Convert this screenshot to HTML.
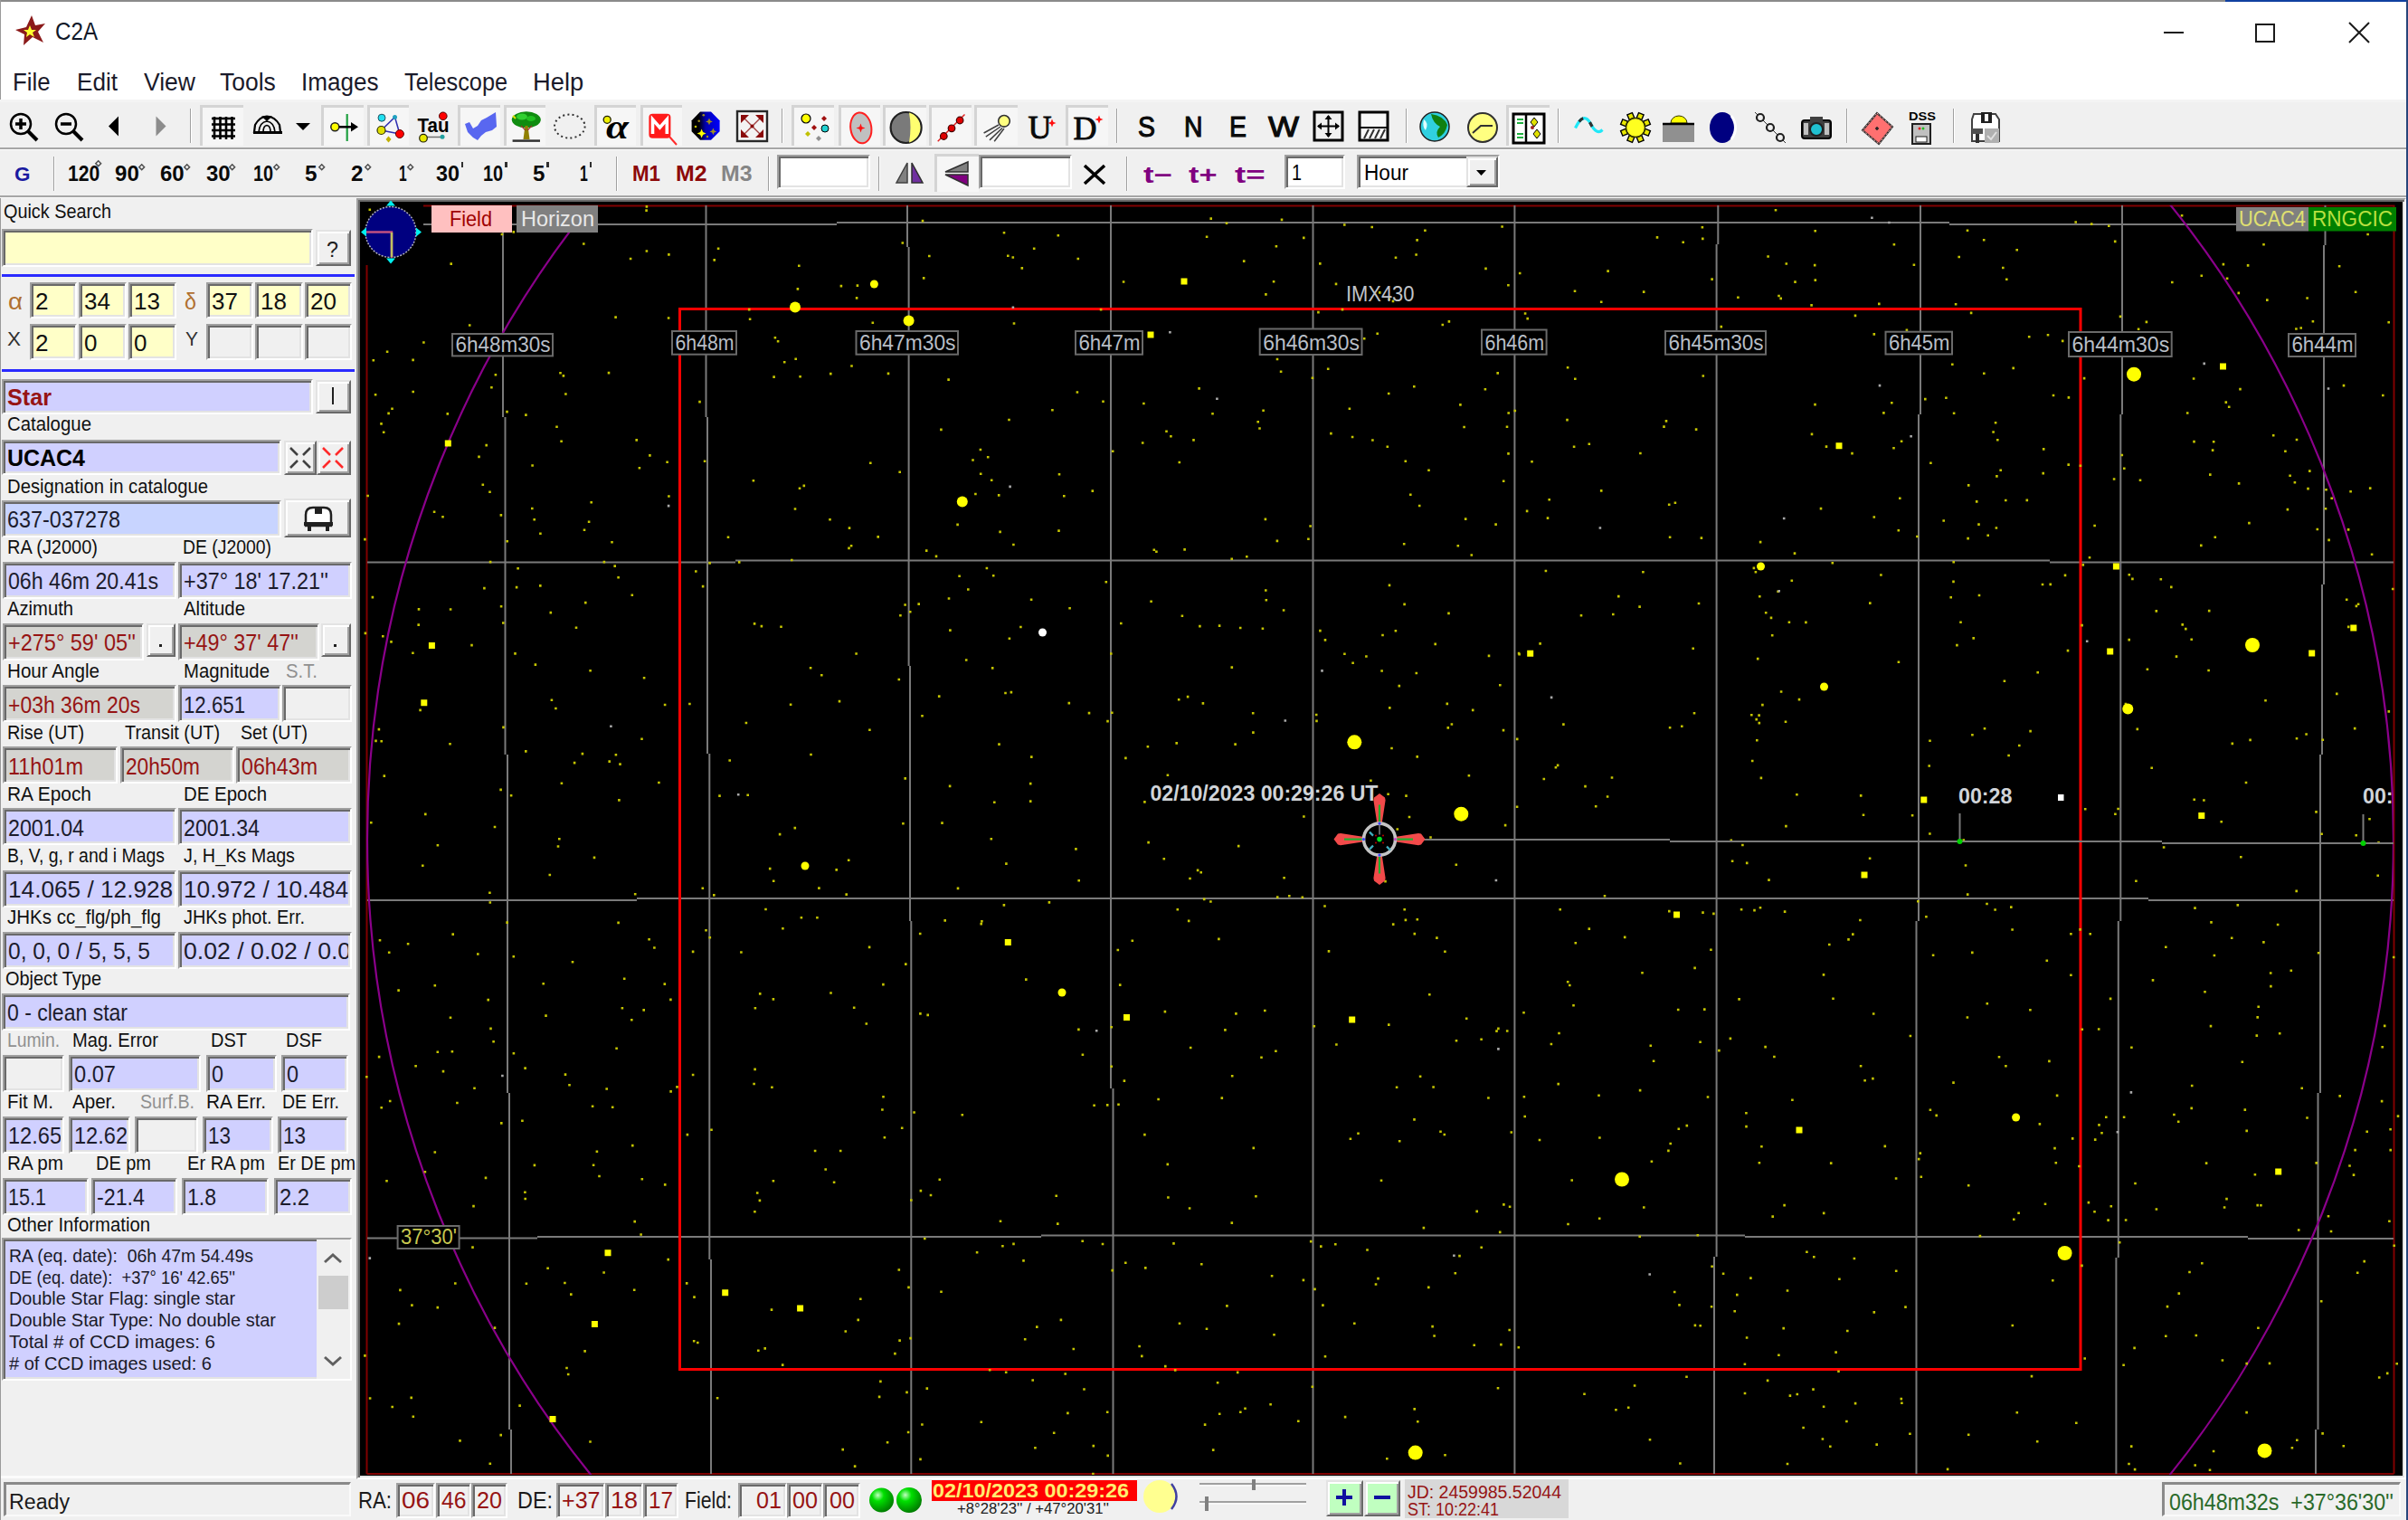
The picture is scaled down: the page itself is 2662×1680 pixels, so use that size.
<!DOCTYPE html>
<html><head><meta charset="utf-8"><title>C2A</title>
<style>
html,body{margin:0;padding:0;}
body{width:2662px;height:1680px;position:relative;overflow:hidden;background:#f0f0f0;font-family:"Liberation Sans",sans-serif;}
.r{position:absolute;box-sizing:border-box;}
.t{position:absolute;white-space:pre;line-height:1;transform-origin:0 0;}
svg.r{overflow:visible}
</style></head><body>
<div class="r" style="left:0.0px;top:0.0px;width:2662.0px;height:110.0px;background:#fff;"></div><div class="r" style="left:0.0px;top:0.0px;width:2460.0px;height:2.0px;background:#8a8a8a;"></div><div class="r" style="left:2460.0px;top:0.0px;width:202.0px;height:2.0px;background:#1040a0;"></div><div class="r" style="left:0.0px;top:0.0px;width:1.0px;height:1680.0px;background:#9a9a9a;"></div><div class="r" style="left:2660.0px;top:0.0px;width:2.0px;height:1680.0px;background:#27457a;"></div><svg class="r" style="left:14px;top:14px;" width="40" height="40" viewBox="0 0 40 40"><path d="M21 3 L25 14 L36 12 L28 21 L34 33 L22 27 L12 36 L13 24 L3 19 L15 16 Z" fill="#8b1a1a"/><path d="M19 14 L21 19 L26 19 L22 22 L24 27 L19 24 L15 27 L16 22 L12 19 L17 19Z" fill="#ffff30"/></svg><div class="t" style="left:61.0px;top:22.1px;font-size:27px;color:#101828;transform:scaleX(0.8948);">C2A</div><div class="r" style="left:2392.0px;top:35.0px;width:22.0px;height:2.0px;background:#1a1a1a;"></div><div class="r" style="left:2493.0px;top:26.0px;width:22.0px;height:21.0px;border:2px solid #1a1a1a;box-sizing:border-box;"></div><svg class="r" style="left:2594px;top:22px;" width="28" height="28" viewBox="0 0 28 28"><path d="M3 3 L25 25 M25 3 L3 25" stroke="#1a1a1a" stroke-width="2"/></svg><div class="t" style="left:14.2px;top:78.0px;font-size:27px;color:#1a1a2a;transform:scaleX(0.9561);">File</div><div class="t" style="left:84.5px;top:78.0px;font-size:27px;color:#1a1a2a;transform:scaleX(0.9672);">Edit</div><div class="t" style="left:158.5px;top:78.0px;font-size:27px;color:#1a1a2a;transform:scaleX(0.9821);">View</div><div class="t" style="left:243.3px;top:78.0px;font-size:27px;color:#1a1a2a;transform:scaleX(0.9804);">Tools</div><div class="t" style="left:333.0px;top:78.0px;font-size:27px;color:#1a1a2a;transform:scaleX(0.9645);">Images</div><div class="t" style="left:447.0px;top:78.0px;font-size:27px;color:#1a1a2a;transform:scaleX(0.9385);">Telescope</div><div class="t" style="left:589.0px;top:78.0px;font-size:27px;color:#1a1a2a;transform:scaleX(1.0120);">Help</div><div class="r" style="left:0.0px;top:110.0px;width:2660.0px;height:3.0px;background:#f4f4f4;"></div><div class="r" style="left:0.0px;top:113.0px;width:2660.0px;height:50.0px;background:#f0f0f0;"></div><div class="r" style="left:0.0px;top:163.0px;width:2660.0px;height:2.0px;background:#a6a6a6;"></div><div class="r" style="left:0.0px;top:165.0px;width:2660.0px;height:1.0px;background:#fdfdfd;"></div><div class="r" style="left:221.0px;top:116.0px;width:48.0px;height:45.0px;background:#f6f6f6;border-top:3px solid #d4d4d4;border-left:3px solid #d4d4d4;box-sizing:border-box;"></div><div class="r" style="left:355.0px;top:116.0px;width:47.0px;height:45.0px;background:#f6f6f6;border-top:3px solid #d4d4d4;border-left:3px solid #d4d4d4;box-sizing:border-box;"></div><div class="r" style="left:405.5px;top:116.0px;width:46.5px;height:45.0px;background:#f6f6f6;border-top:3px solid #d4d4d4;border-left:3px solid #d4d4d4;box-sizing:border-box;"></div><div class="r" style="left:506.0px;top:116.0px;width:47.0px;height:45.0px;background:#f6f6f6;border-top:3px solid #d4d4d4;border-left:3px solid #d4d4d4;box-sizing:border-box;"></div><div class="r" style="left:557.0px;top:116.0px;width:45.5px;height:45.0px;background:#f6f6f6;border-top:3px solid #d4d4d4;border-left:3px solid #d4d4d4;box-sizing:border-box;"></div><div class="r" style="left:656.7px;top:116.0px;width:46.3px;height:45.0px;background:#f6f6f6;border-top:3px solid #d4d4d4;border-left:3px solid #d4d4d4;box-sizing:border-box;"></div><div class="r" style="left:707.5px;top:116.0px;width:46.5px;height:45.0px;background:#f6f6f6;border-top:3px solid #d4d4d4;border-left:3px solid #d4d4d4;box-sizing:border-box;"></div><div class="r" style="left:926.7px;top:116.0px;width:46.7px;height:45.0px;background:#f6f6f6;border-top:3px solid #d4d4d4;border-left:3px solid #d4d4d4;box-sizing:border-box;"></div><div class="r" style="left:976.4px;top:116.0px;width:47.6px;height:45.0px;background:#f6f6f6;border-top:3px solid #d4d4d4;border-left:3px solid #d4d4d4;box-sizing:border-box;"></div><div class="r" style="left:1026.5px;top:116.0px;width:47.5px;height:45.0px;background:#f6f6f6;border-top:3px solid #d4d4d4;border-left:3px solid #d4d4d4;box-sizing:border-box;"></div><div class="r" style="left:1077.0px;top:116.0px;width:47.8px;height:45.0px;background:#f6f6f6;border-top:3px solid #d4d4d4;border-left:3px solid #d4d4d4;box-sizing:border-box;"></div><div class="r" style="left:1178.0px;top:116.0px;width:46.6px;height:45.0px;background:#f6f6f6;border-top:3px solid #d4d4d4;border-left:3px solid #d4d4d4;box-sizing:border-box;"></div><div class="r" style="left:1665.0px;top:116.0px;width:47.7px;height:45.0px;background:#f6f6f6;border-top:3px solid #d4d4d4;border-left:3px solid #d4d4d4;box-sizing:border-box;"></div><div class="r" style="left:875.0px;top:116.0px;width:47.4px;height:45.0px;background:#f6f6f6;border-top:3px solid #d4d4d4;border-left:3px solid #d4d4d4;box-sizing:border-box;"></div><div class="r" style="left:210.0px;top:120.0px;width:1.0px;height:38.0px;background:#a0a0a0;"></div><div class="r" style="left:211.0px;top:120.0px;width:1.0px;height:38.0px;background:#fff;"></div><div class="r" style="left:864.0px;top:120.0px;width:1.0px;height:38.0px;background:#a0a0a0;"></div><div class="r" style="left:865.0px;top:120.0px;width:1.0px;height:38.0px;background:#fff;"></div><div class="r" style="left:1234.0px;top:120.0px;width:1.0px;height:38.0px;background:#a0a0a0;"></div><div class="r" style="left:1235.0px;top:120.0px;width:1.0px;height:38.0px;background:#fff;"></div><div class="r" style="left:1553.6px;top:120.0px;width:1.0px;height:38.0px;background:#a0a0a0;"></div><div class="r" style="left:1554.6px;top:120.0px;width:1.0px;height:38.0px;background:#fff;"></div><div class="r" style="left:1721.8px;top:120.0px;width:1.0px;height:38.0px;background:#a0a0a0;"></div><div class="r" style="left:1722.8px;top:120.0px;width:1.0px;height:38.0px;background:#fff;"></div><div class="r" style="left:2040.7px;top:120.0px;width:1.0px;height:38.0px;background:#a0a0a0;"></div><div class="r" style="left:2041.7px;top:120.0px;width:1.0px;height:38.0px;background:#fff;"></div><div class="r" style="left:2159.0px;top:120.0px;width:1.0px;height:38.0px;background:#a0a0a0;"></div><div class="r" style="left:2160.0px;top:120.0px;width:1.0px;height:38.0px;background:#fff;"></div><svg class="r" style="left:8px;top:122px;" width="38" height="36" viewBox="0 0 38 36"><circle cx="15" cy="15" r="11" fill="none" stroke="#000" stroke-width="2.5"/><path d="M9 15h12M15 9v12" stroke="#000" stroke-width="3.5"/><path d="M23 23 L33 33" stroke="#000" stroke-width="4"/></svg><svg class="r" style="left:58px;top:122px;" width="38" height="36" viewBox="0 0 38 36"><circle cx="15" cy="15" r="11" fill="none" stroke="#000" stroke-width="2.5"/><path d="M9 15h12" stroke="#000" stroke-width="3.5"/><path d="M23 23 L33 33" stroke="#000" stroke-width="4"/></svg><svg class="r" style="left:117px;top:126px;" width="18" height="28" viewBox="0 0 18 28"><path d="M14 2.5 L3 13.5 L14 24.5Z" fill="#000"/></svg><svg class="r" style="left:170px;top:126px;" width="18" height="28" viewBox="0 0 18 28"><path d="M2.5 2.5 L13.5 13.5 L2.5 24.5Z" fill="#8c8c8c"/></svg><svg class="r" style="left:234px;top:128px;" width="32" height="32" viewBox="0 0 32 32"><path d="M3.0 1v25M0 3.0h26" stroke="#000" stroke-width="2.6"/><path d="M9.5 1v25M0 9.5h26" stroke="#000" stroke-width="2.6"/><path d="M16.0 1v25M0 16.0h26" stroke="#000" stroke-width="2.6"/><path d="M22.5 1v25M0 22.5h26" stroke="#000" stroke-width="2.6"/></svg><svg class="r" style="left:279px;top:126px;" width="34" height="24" viewBox="0 0 34 24"><path d="M2 20 L3 12 Q8 3 16 2.5 Q25 3 30 12 L31 20Z" fill="none" stroke="#000" stroke-width="2.2"/><path d="M7 20 Q8 9 16 8 Q24 9 25 20M12 20 Q12 13 16 12.5 Q20 13 20 20" fill="none" stroke="#000" stroke-width="1.6"/><path d="M10 2.5 L22 2.5 L16 8Z" fill="#000"/><path d="M1 20.5h32" stroke="#000" stroke-width="3"/></svg><svg class="r" style="left:326px;top:134px;" width="20" height="12" viewBox="0 0 20 12"><path d="M1 2 L17 2 L9 10Z" fill="#000"/></svg><svg class="r" style="left:358px;top:124px;" width="42" height="34" viewBox="0 0 42 34"><path d="M25.7 2v30" stroke="#20a040" stroke-width="2.2"/><path d="M16 16.3h16" stroke="#000" stroke-width="2.5"/><path d="M30 11 L38 16.3 L30 21.6Z" fill="#000"/><circle cx="12.3" cy="16.3" r="4.5" fill="#ffff00" stroke="#202020" stroke-width="1.5"/></svg><svg class="r" style="left:408px;top:124px;" width="42" height="34" viewBox="0 0 42 34"><path d="M13.5 20 L28.5 5.4 L33.9 24Z" fill="none" stroke="#3030b0" stroke-width="1.6"/><circle cx="14" cy="6.2" r="4" fill="#20e0f0" stroke="#205060" stroke-width="1"/><circle cx="28.5" cy="5.4" r="2.5" fill="#20a0c0"/><circle cx="13.5" cy="20" r="4.5" fill="#e0e000" stroke="#303000" stroke-width="1.2"/><circle cx="33.9" cy="24" r="4.5" fill="#ff0000" stroke="#600000" stroke-width="1"/><path d="M21.5 26.5 L24.5 30 L21.5 33.5 L18.5 30Z" fill="#c0b000"/></svg><svg class="r" style="left:460px;top:122px;" width="40" height="36" viewBox="0 0 40 36"><text x="1.5" y="24" font-family="Liberation Sans" font-weight="bold" font-size="22" fill="#000" textLength="35" lengthAdjust="spacingAndGlyphs">Tau</text><circle cx="29.8" cy="6.3" r="4.3" fill="#ff0000" stroke="#500000" stroke-width="1"/><path d="M8 29.5H29" stroke="#707070" stroke-width="1.5"/><circle cx="8" cy="30.7" r="4.3" fill="#e8e800" stroke="#202000" stroke-width="1.2"/><circle cx="29" cy="29.2" r="2.5" fill="#20a0a0"/></svg><svg class="r" style="left:510px;top:122px;" width="42" height="36" viewBox="0 0 42 36"><path d="M4 15 L9 13 L13 20 L18 17 L22 11 L28 8 L33 5 L38 2 L39 18 L34 22 L27 24 L22 28 L18 33 L13 30 L7 24Z" fill="#4858f0" opacity="0.9"/></svg><svg class="r" style="left:561px;top:122px;" width="40" height="38" viewBox="0 0 40 38"><ellipse cx="20.8" cy="10.3" rx="16" ry="9" fill="#108c10"/><ellipse cx="16" cy="7" rx="6" ry="3.5" fill="#30d030"/><ellipse cx="26" cy="9" rx="5" ry="3" fill="#20c020"/><path d="M6 6 L9 9" stroke="#e0e000" stroke-width="2"/><path d="M19.5 17 L17.5 32 L24.5 32 L22.5 17Z" fill="#908000"/><path d="M15 17 L20 22M27 17 L22 22" stroke="#a03030" stroke-width="1.2"/><path d="M5.6 33.6h30.4" stroke="#303030" stroke-width="2.5"/></svg><svg class="r" style="left:610px;top:124px;" width="40" height="32" viewBox="0 0 40 32"><ellipse cx="19.8" cy="15.6" rx="16.8" ry="13" fill="none" stroke="#303030" stroke-width="2" stroke-dasharray="2 3.2"/></svg><svg class="r" style="left:660px;top:122px;" width="42" height="38" viewBox="0 0 42 38"><circle cx="11.2" cy="10.3" r="4" fill="#f0f000" stroke="#202000" stroke-width="1.3"/><text x="10" y="30.5" font-family="Liberation Serif" font-style="italic" font-weight="bold" font-size="38" fill="#000" textLength="25" lengthAdjust="spacingAndGlyphs">α</text></svg><svg class="r" style="left:711px;top:124px;" width="42" height="38" viewBox="0 0 42 38"><rect x="6.4" y="1.8" width="24" height="27" rx="4" fill="#ff1a1a"/><path d="M10.5 24 V8 L18.4 17 L26.3 8 V24" fill="none" stroke="#fff" stroke-width="3.6"/><path d="M29 27 L37 36" stroke="#ff2a2a" stroke-width="2"/></svg><svg class="r" style="left:764px;top:123px;" width="34" height="34" viewBox="0 0 34 34"><defs><linearGradient id="og" x1="0" x2="1"><stop offset="0" stop-color="#000"/><stop offset="0.25" stop-color="#000"/><stop offset="0.5" stop-color="#0000b0"/><stop offset="1" stop-color="#0000ff"/></linearGradient></defs><path d="M10 0.6h12l9.6 9.6v12L22 31.8H10L0.6 22.2v-12Z" fill="url(#og)"/><path d="M11.6 19.5l1.5 3.5l3.5 1.5l-3.5 1.5l-1.5 3.5l-1.5-3.5l-3.5-1.5l3.5-1.5Z" fill="#ffff00"/><path d="M20 7.5l1.2 2.7l2.7 1.2l-2.7 1.2l-1.2 2.7l-1.2-2.7l-2.7-1.2l2.7-1.2Z" fill="#a09020"/><path d="M24.4 18.5l1.2 2.7l2.7 1.2l-2.7 1.2l-1.2 2.7l-1.2-2.7l-2.7-1.2l2.7-1.2Z" fill="#a09020"/><circle cx="5" cy="17" r="1.3" fill="#c0c000"/><circle cx="13.8" cy="4.3" r="1.3" fill="#a09020"/><circle cx="8.7" cy="10.8" r="1.3" fill="#a09020"/><circle cx="18" cy="28" r="1.2" fill="#a09020"/></svg><svg class="r" style="left:812px;top:121px;" width="38" height="37" viewBox="0 0 38 37"><rect x="3" y="2" width="33" height="33" fill="#f4f4f4" stroke="#282828" stroke-width="2.4"/><path d="M9 8L30 29M30 8L9 29" stroke="#a04040" stroke-width="1.4"/><path d="M7 6h9l-9 9ZM32 6h-9l9 9ZM7 31h9l-9-9ZM32 31h-9l9-9Z" fill="#8a0a0a"/><circle cx="19.5" cy="18.5" r="2" fill="#8a0a0a"/></svg><svg class="r" style="left:884px;top:124px;" width="36" height="34" viewBox="0 0 36 34"><circle cx="7" cy="7" r="5" fill="#ffff00" stroke="#000" stroke-width="1.2"/><path d="M27 4l3 3l-3 3l-3-3Z" fill="#a01010"/><path d="M16 14l3 3l-3 3l-3-3Z" fill="#a01010"/><circle cx="28" cy="18" r="4" fill="#20d0d0" stroke="#000"/><path d="M9 21l3 3l-3 3l-3-3Z" fill="#c0c000"/><path d="M21 26l3 3l-3 3l-3-3Z" fill="#909090"/></svg><svg class="r" style="left:936px;top:122px;" width="32" height="40" viewBox="0 0 32 40"><ellipse cx="15.8" cy="19.4" rx="11.5" ry="17" fill="#c0c0c0" stroke="#ff2020" stroke-width="2" transform="rotate(-8 15.8 19.4)"/><path d="M15.5 14.5l1.3 3.7l3.7 1.3l-3.7 1.3l-1.3 3.7l-1.3-3.7l-3.7-1.3l3.7-1.3Z" fill="#ff1010"/></svg><svg class="r" style="left:982px;top:122px;" width="40" height="40" viewBox="0 0 40 40"><circle cx="19.6" cy="19" r="17" fill="#7a7a7a" stroke="#202020" stroke-width="2.2"/><path d="M23 2.6 A17 17 0 0 1 23 35.4 Q26 19 23 2.6Z" fill="#ffff70"/></svg><svg class="r" style="left:1030px;top:124px;" width="40" height="36" viewBox="0 0 40 36"><path d="M6.7 32.3 L36.5 2.5" stroke="#e02020" stroke-width="1.5"/><circle cx="13.3" cy="26.5" r="3.8" fill="#e00000" stroke="#400000" stroke-width="1.2"/><circle cx="22" cy="17.8" r="3.8" fill="#e00000" stroke="#400000" stroke-width="1.2"/><circle cx="31.1" cy="9" r="3.8" fill="#e00000" stroke="#400000" stroke-width="1.2"/></svg><svg class="r" style="left:1084px;top:122px;" width="40" height="38" viewBox="0 0 40 38"><path d="M20 16L3.6 25M22 18L5.8 29.2M24 19.5L10 32.9M26 20L15.2 34.3" stroke="#404040" stroke-width="1.5"/><circle cx="26" cy="11.8" r="6.3" fill="#ffff80" stroke="#303030" stroke-width="1.6"/></svg><div class="t" style="left:1136.5px;top:122.6px;font-size:36px;color:#0a0a0a;transform:scaleX(1.0000);font-family:'Liberation Serif';-webkit-text-stroke:0.9px #0a0a0a;">U</div><svg class="r" style="left:1158px;top:131px;" width="10" height="10" viewBox="0 0 10 10"><path d="M5 0.5 L6.3 3.7 L9.5 5 L6.3 6.3 L5 9.5 L3.7 6.3 L0.5 5 L3.7 3.7Z" fill="#ff1010"/></svg><div class="t" style="left:1186.5px;top:124.4px;font-size:36px;color:#0a0a0a;transform:scaleX(1.0000);font-family:'Liberation Serif';-webkit-text-stroke:0.9px #0a0a0a;">D</div><svg class="r" style="left:1210px;top:126.5px;" width="10" height="10" viewBox="0 0 10 10"><path d="M5 0.5 L6.3 3.7 L9.5 5 L6.3 6.3 L5 9.5 L3.7 6.3 L0.5 5 L3.7 3.7Z" fill="#ff1010"/></svg><div class="t" style="left:1257.5px;top:123.6px;font-size:32px;color:#0a0a0a;transform:scaleX(0.8901);-webkit-text-stroke:1.1px #0a0a0a;">S</div><div class="t" style="left:1308.5px;top:123.6px;font-size:32px;color:#0a0a0a;transform:scaleX(0.8871);-webkit-text-stroke:1.1px #0a0a0a;">N</div><div class="t" style="left:1358.5px;top:123.6px;font-size:32px;color:#0a0a0a;transform:scaleX(0.8901);-webkit-text-stroke:1.1px #0a0a0a;">E</div><div class="t" style="left:1401.5px;top:123.6px;font-size:32px;color:#0a0a0a;transform:scaleX(1.1257);-webkit-text-stroke:1.1px #0a0a0a;">W</div><svg class="r" style="left:1451px;top:122px;" width="36" height="36" viewBox="0 0 36 36"><rect x="2" y="2" width="31" height="31" fill="none" stroke="#000" stroke-width="3"/><path d="M17.5 6v23M6 17.5h23" stroke="#000" stroke-width="2"/><path d="M17.5 5l-4 5h8ZM17.5 30l-4-5h8ZM5 17.5l5-4v8ZM30 17.5l-5-4v8Z" fill="#000"/></svg><svg class="r" style="left:1501px;top:122px;" width="36" height="36" viewBox="0 0 36 36"><rect x="2" y="2" width="31" height="31" fill="#f8f8f8" stroke="#000" stroke-width="3"/><path d="M2 19h31" stroke="#000" stroke-width="2"/><path d="M7 31l5-10M13 31l5-10M19 31l5-10M25 31l5-10" stroke="#303030" stroke-width="2"/></svg><svg class="r" style="left:1568px;top:122px;" width="36" height="36" viewBox="0 0 36 36"><circle cx="18" cy="18" r="16" fill="#30d0e0" stroke="#202020" stroke-width="1.5"/><path d="M14 4 Q28 6 32 16 Q30 26 22 30 Q18 24 24 18 Q16 14 14 4Z" fill="#108010"/><path d="M6 10 Q12 14 8 22 Q4 18 6 10Z" fill="#e0ffff"/></svg><svg class="r" style="left:1620px;top:122px;" width="38" height="38" viewBox="0 0 38 38"><circle cx="19" cy="19" r="16" fill="#ffff80" stroke="#303030" stroke-width="2"/><path d="M8 25 L17 17 L30 17" fill="none" stroke="#303030" stroke-width="2"/></svg><svg class="r" style="left:1671px;top:124px;" width="38" height="36" viewBox="0 0 38 36"><rect x="2" y="2" width="34" height="32" fill="#fff" stroke="#000" stroke-width="3"/><path d="M16 2v32" stroke="#000" stroke-width="2.5"/><path d="M6 8h7M6 12h7M6 24h7M6 28h7" stroke="#20b040" stroke-width="2"/><path d="M25 6l4 5l-4 5l-4-5Z" fill="#e0e000" stroke="#000" stroke-width="1"/><path d="M28 19l4 5l-4 5l-4-5Z" fill="#e0e000" stroke="#000" stroke-width="1"/><circle cx="23" cy="17" r="2" fill="#a02020"/></svg><svg class="r" style="left:1738px;top:124px;" width="38" height="30" viewBox="0 0 38 30"><path d="M3.5 17.5 Q12.5 -1 20 12 Q27 26 33.5 19.5" fill="none" stroke="#20e8f8" stroke-width="3.2"/><path d="M3.5 17.5 Q12.5 -1 20 12 Q27 26 33.5 19.5" fill="none" stroke="#303030" stroke-width="3.2" stroke-dasharray="0 8 6 9 5 20"/></svg><svg class="r" style="left:1789px;top:122px;" width="38" height="38" viewBox="0 0 38 38"><g fill="#e8e800" stroke="#000" stroke-width="1.4"><rect x="28.5" y="21.2" width="6" height="6" transform="rotate(22 31.5 24.2)"/><rect x="21.2" y="28.5" width="6" height="6" transform="rotate(68 24.2 31.5)"/><rect x="10.8" y="28.5" width="6" height="6" transform="rotate(112 13.8 31.5)"/><rect x="3.5" y="21.2" width="6" height="6" transform="rotate(158 6.5 24.2)"/><rect x="3.5" y="10.8" width="6" height="6" transform="rotate(202 6.5 13.8)"/><rect x="10.8" y="3.5" width="6" height="6" transform="rotate(247 13.8 6.5)"/><rect x="21.2" y="3.5" width="6" height="6" transform="rotate(292 24.2 6.5)"/><rect x="28.5" y="10.8" width="6" height="6" transform="rotate(338 31.5 13.8)"/></g><circle cx="19" cy="19" r="10.5" fill="#ffff20" stroke="#303000" stroke-width="1.4"/></svg><svg class="r" style="left:1837px;top:124px;" width="38" height="36" viewBox="0 0 38 36"><path d="M10 12 A9 8 0 0 1 28 12Z" fill="#ffff00" stroke="#303000"/><rect x="1" y="13" width="35" height="20" fill="#909090"/><path d="M1 13h35" stroke="#000" stroke-width="2.5"/></svg><svg class="r" style="left:1887px;top:122px;" width="40" height="38" viewBox="0 0 40 38"><ellipse cx="17" cy="19" rx="14" ry="17" fill="#000080"/><path d="M27 6 Q36 19 27 32" fill="none" stroke="#fff" stroke-width="3"/></svg><svg class="r" style="left:1938px;top:122px;" width="40" height="38" viewBox="0 0 40 38"><path d="M2 2L36 36" stroke="#303030" stroke-width="1"/><circle cx="8" cy="8" r="4" fill="#f0f0f0" stroke="#202020" stroke-width="2.2"/><circle cx="19" cy="19" r="4" fill="#f0f0f0" stroke="#202020" stroke-width="2.2"/><circle cx="30" cy="30" r="4" fill="#f0f0f0" stroke="#202020" stroke-width="2.2"/></svg><svg class="r" style="left:1990px;top:126px;" width="38" height="30" viewBox="0 0 38 30"><rect x="2" y="7" width="32" height="20" rx="3" fill="#404040" stroke="#000" stroke-width="2"/><rect x="11" y="3" width="14" height="6" fill="#404040"/><rect x="4" y="10" width="5" height="13" fill="#c0c0c0"/><rect x="27" y="10" width="5" height="13" fill="#c0c0c0"/><circle cx="18" cy="17" r="7" fill="#20c0d0" stroke="#202020" stroke-width="2"/></svg><svg class="r" style="left:2055px;top:122px;" width="40" height="40" viewBox="0 0 40 40"><path d="M20 3 L37 18 L22 37 L4 22Z" fill="#ff7070" stroke="#303030" stroke-width="2"/><path d="M20 3 L37 18 L22 37 L4 22Z" fill="none" stroke="#ffb0b0" stroke-width="1" stroke-dasharray="2 2"/><path d="M20 20m-2 0h4M20 18v4" stroke="#202020" stroke-width="1.5"/></svg><svg class="r" style="left:2110px;top:122px;" width="32" height="38" viewBox="0 0 32 38"><text x="0" y="11" font-family="Liberation Sans" font-weight="bold" font-size="12" textLength="30" lengthAdjust="spacingAndGlyphs">DSS</text><rect x="4" y="15" width="20" height="22" fill="#c0c0c0" stroke="#202020" stroke-width="2"/><rect x="8" y="29" width="12" height="6" fill="#fff" stroke="#202020"/><circle cx="12" cy="20" r="1.5" fill="#e02020"/><circle cx="16" cy="20" r="1.5" fill="#20c020"/></svg><svg class="r" style="left:2176px;top:122px;" width="38" height="38" viewBox="0 0 38 38"><path d="M6 4 H30 L34 10 V34 H4 V10Z" fill="#fff" stroke="#404040" stroke-width="2"/><rect x="14" y="2" width="12" height="12" fill="#202020"/><rect x="18" y="4" width="4" height="8" fill="#fff"/><rect x="4" y="20" width="12" height="6" fill="#505050"/><rect x="8" y="26" width="4" height="10" fill="#303030"/><rect x="18" y="20" width="16" height="16" fill="#b0b0b0"/><path d="M21 28l4 4l6-8" fill="none" stroke="#e0e0e0" stroke-width="2"/></svg><div class="r" style="left:0.0px;top:166.0px;width:2660.0px;height:50.0px;background:#f0f0f0;"></div><div class="r" style="left:0.0px;top:216.0px;width:2660.0px;height:2.0px;background:#a6a6a6;"></div><div class="r" style="left:0.0px;top:218.0px;width:2660.0px;height:1.0px;background:#fafafa;"></div><div class="r" style="left:59.0px;top:173.0px;width:1.0px;height:38.0px;background:#a0a0a0;"></div><div class="r" style="left:60.0px;top:173.0px;width:1.0px;height:38.0px;background:#fff;"></div><div class="r" style="left:681.0px;top:173.0px;width:1.0px;height:38.0px;background:#a0a0a0;"></div><div class="r" style="left:682.0px;top:173.0px;width:1.0px;height:38.0px;background:#fff;"></div><div class="r" style="left:849.0px;top:173.0px;width:1.0px;height:38.0px;background:#a0a0a0;"></div><div class="r" style="left:850.0px;top:173.0px;width:1.0px;height:38.0px;background:#fff;"></div><div class="r" style="left:970.6px;top:173.0px;width:1.0px;height:38.0px;background:#a0a0a0;"></div><div class="r" style="left:971.6px;top:173.0px;width:1.0px;height:38.0px;background:#fff;"></div><div class="r" style="left:1244.5px;top:173.0px;width:1.0px;height:38.0px;background:#a0a0a0;"></div><div class="r" style="left:1245.5px;top:173.0px;width:1.0px;height:38.0px;background:#fff;"></div><div class="t" style="left:16.0px;top:182.3px;font-size:22px;color:#1a1aa0;font-weight:bold;transform:scaleX(1.0227);">G</div><div class="t" style="left:75.0px;top:181.2px;font-size:23px;color:#0a0a0a;font-weight:bold;transform:scaleX(0.9198);">120</div><svg class="r" style="left:105px;top:176.6px;" width="8" height="8" viewBox="0 0 8 8"><path d="M3.7 0.8 L6.6 3.7 L3.7 6.6 L0.8 3.7Z" fill="none" stroke="#505050" stroke-width="1.5"/></svg><div class="t" style="left:127.4px;top:181.2px;font-size:23px;color:#0a0a0a;font-weight:bold;transform:scaleX(1.0475);">90</div><svg class="r" style="left:153px;top:180.6px;" width="8" height="8" viewBox="0 0 8 8"><path d="M3.7 0.8 L6.6 3.7 L3.7 6.6 L0.8 3.7Z" fill="none" stroke="#505050" stroke-width="1.5"/></svg><div class="t" style="left:177.3px;top:181.2px;font-size:23px;color:#0a0a0a;font-weight:bold;transform:scaleX(1.0436);">60</div><svg class="r" style="left:202.9px;top:180.6px;" width="8" height="8" viewBox="0 0 8 8"><path d="M3.7 0.8 L6.6 3.7 L3.7 6.6 L0.8 3.7Z" fill="none" stroke="#505050" stroke-width="1.5"/></svg><div class="t" style="left:227.8px;top:181.2px;font-size:23px;color:#0a0a0a;font-weight:bold;transform:scaleX(1.0436);">30</div><svg class="r" style="left:253.4px;top:180.6px;" width="8" height="8" viewBox="0 0 8 8"><path d="M3.7 0.8 L6.6 3.7 L3.7 6.6 L0.8 3.7Z" fill="none" stroke="#505050" stroke-width="1.5"/></svg><div class="t" style="left:280.3px;top:181.2px;font-size:23px;color:#0a0a0a;font-weight:bold;transform:scaleX(0.8638);">10</div><svg class="r" style="left:301.9px;top:180.6px;" width="8" height="8" viewBox="0 0 8 8"><path d="M3.7 0.8 L6.6 3.7 L3.7 6.6 L0.8 3.7Z" fill="none" stroke="#505050" stroke-width="1.5"/></svg><div class="t" style="left:337.4px;top:181.2px;font-size:23px;color:#0a0a0a;font-weight:bold;transform:scaleX(1.0554);">5</div><svg class="r" style="left:351.7px;top:180.6px;" width="8" height="8" viewBox="0 0 8 8"><path d="M3.7 0.8 L6.6 3.7 L3.7 6.6 L0.8 3.7Z" fill="none" stroke="#505050" stroke-width="1.5"/></svg><div class="t" style="left:387.6px;top:181.2px;font-size:23px;color:#0a0a0a;font-weight:bold;transform:scaleX(1.0554);">2</div><svg class="r" style="left:402.6px;top:181.3px;" width="8" height="8" viewBox="0 0 8 8"><path d="M3.7 0.8 L6.6 3.7 L3.7 6.6 L0.8 3.7Z" fill="none" stroke="#505050" stroke-width="1.5"/></svg><div class="t" style="left:440.8px;top:181.2px;font-size:23px;color:#0a0a0a;font-weight:bold;transform:scaleX(0.6801);">1</div><svg class="r" style="left:449.7px;top:181.3px;" width="8" height="8" viewBox="0 0 8 8"><path d="M3.7 0.8 L6.6 3.7 L3.7 6.6 L0.8 3.7Z" fill="none" stroke="#505050" stroke-width="1.5"/></svg><div class="t" style="left:482.0px;top:181.2px;font-size:23px;color:#0a0a0a;font-weight:bold;transform:scaleX(1.0163);">30</div><div class="r" style="left:509.5px;top:178.6px;width:2.7px;height:6.7px;background:#303030;"></div><div class="t" style="left:534.4px;top:181.2px;font-size:23px;color:#0a0a0a;font-weight:bold;transform:scaleX(0.8638);">10</div><div class="r" style="left:558.0px;top:178.6px;width:2.7px;height:6.7px;background:#303030;"></div><div class="t" style="left:589.0px;top:181.2px;font-size:23px;color:#0a0a0a;font-weight:bold;transform:scaleX(1.0475);">5</div><div class="r" style="left:603.9px;top:178.6px;width:2.7px;height:6.7px;background:#303030;"></div><div class="t" style="left:641.4px;top:181.2px;font-size:23px;color:#0a0a0a;font-weight:bold;transform:scaleX(0.6879);">1</div><div class="r" style="left:651.7px;top:178.6px;width:2.7px;height:6.7px;background:#303030;"></div><div class="t" style="left:698.5px;top:181.4px;font-size:23px;color:#8c0808;font-weight:bold;transform:scaleX(0.9702);">M1</div><div class="t" style="left:747.0px;top:181.4px;font-size:23px;color:#8c0808;font-weight:bold;transform:scaleX(1.0797);">M2</div><div class="t" style="left:797.0px;top:181.4px;font-size:23px;color:#858585;font-weight:bold;transform:scaleX(1.0797);">M3</div><div class="r" style="left:859.0px;top:171.0px;width:103.0px;height:38.0px;background:#fff;border:2px solid;border-color:#a0a0a0 #fff #fff #a0a0a0;box-shadow:inset 2px 2px 0 #696969,inset -2px -2px 0 #e3e3e3;"></div><svg class="r" style="left:988px;top:178px;" width="36" height="28" viewBox="0 0 36 28"><path d="M15 2 L15 24 L3 24Z" fill="#808080" stroke="#404040" stroke-width="1.5"/><path d="M20 2 L20 24 L32 24Z" fill="#7030a0" stroke="#303030" stroke-width="1.5"/></svg><div class="r" style="left:1033.0px;top:170.0px;width:49.0px;height:42.0px;background:#f6f6f6;border-top:3px solid #d4d4d4;border-left:3px solid #d4d4d4;box-sizing:border-box;"></div><svg class="r" style="left:1040px;top:176px;" width="36" height="32" viewBox="0 0 36 32"><path d="M30 3 L30 14 L5 14Z" fill="#808080" stroke="#303030" stroke-width="1.5"/><path d="M30 17 L30 29 L5 17Z" fill="#800080" stroke="#303030" stroke-width="1.5"/></svg><div class="r" style="left:1082.0px;top:171.0px;width:103.0px;height:38.0px;background:#fff;border:2px solid;border-color:#a0a0a0 #fff #fff #a0a0a0;box-shadow:inset 2px 2px 0 #696969,inset -2px -2px 0 #e3e3e3;"></div><svg class="r" style="left:1196px;top:180px;" width="28" height="26" viewBox="0 0 28 26"><path d="M3 3L25 23M25 3L3 23" stroke="#000" stroke-width="3.5"/></svg><div class="t" style="left:1264.0px;top:180.8px;font-size:25px;color:#800080;font-weight:bold;transform:scaleX(1.3958);">t−</div><div class="t" style="left:1314.4px;top:180.8px;font-size:25px;color:#800080;font-weight:bold;transform:scaleX(1.3784);">t+</div><div class="t" style="left:1365.0px;top:180.8px;font-size:25px;color:#800080;font-weight:bold;transform:scaleX(1.4656);">t=</div><div class="r" style="left:1420.0px;top:171.0px;width:67.0px;height:38.0px;background:#fff;border:2px solid;border-color:#a0a0a0 #fff #fff #a0a0a0;box-shadow:inset 2px 2px 0 #696969,inset -2px -2px 0 #e3e3e3;"></div><div class="t" style="left:1428.0px;top:180.4px;font-size:23px;transform:scaleX(0.8599);">1</div><div class="r" style="left:1500.0px;top:171.0px;width:158.0px;height:38.0px;background:#fff;border:2px solid;border-color:#a0a0a0 #fff #fff #a0a0a0;box-shadow:inset 2px 2px 0 #696969,inset -2px -2px 0 #e3e3e3;"></div><div class="t" style="left:1508.0px;top:180.4px;font-size:23px;transform:scaleX(0.9829);">Hour</div><div class="r" style="left:1621.0px;top:173.0px;width:35.0px;height:34.0px;background:#f0f0f0;border:2px solid;border-color:#e3e3e3 #696969 #696969 #e3e3e3;box-shadow:inset 2px 2px 0 #fff,inset -2px -2px 0 #a0a0a0;"></div><svg class="r" style="left:1630px;top:186px;" width="16" height="10" viewBox="0 0 16 10"><path d="M2 2h11l-5.5 6Z" fill="#000"/></svg><div class="r" style="left:1.0px;top:219.0px;width:393.0px;height:1412.0px;background:#f0f0f0;"></div><div class="t" style="left:3.5px;top:222.8px;font-size:22px;color:#101010;transform:scaleX(0.9011);">Quick Search</div><div class="r" style="left:2.0px;top:253.0px;width:344.0px;height:42.0px;background:#ffffc8;border:2px solid;border-color:#a0a0a0 #fff #fff #a0a0a0;box-shadow:inset 2px 2px 0 #696969,inset -2px -2px 0 #e3e3e3;"></div><div class="r" style="left:349.0px;top:254.0px;width:39.0px;height:40.0px;background:#f0f0f0;border:2px solid;border-color:#e3e3e3 #696969 #696969 #e3e3e3;box-shadow:inset 2px 2px 0 #fff,inset -2px -2px 0 #a0a0a0;"></div><div class="t" style="left:361.0px;top:263.6px;font-size:24px;color:#202020;transform:scaleX(0.9739);">?</div><div class="r" style="left:2.0px;top:303.0px;width:390.0px;height:3.0px;background:#2a2aff;"></div><div class="t" style="left:9.0px;top:320.8px;font-size:25px;color:#b07030;transform:scaleX(1.1070);">α</div><div class="t" style="left:204.0px;top:320.8px;font-size:25px;color:#b07030;transform:scaleX(0.9342);">δ</div><div class="r" style="left:33.0px;top:312.0px;width:52.0px;height:40.0px;background:#ffffc8;border:2px solid;border-color:#a0a0a0 #fff #fff #a0a0a0;box-shadow:inset 2px 2px 0 #696969,inset -2px -2px 0 #e3e3e3;"></div><div class="r" style="left:37px;top:316px;width:44px;height:32px;overflow:hidden"><div class="t" style="left:2.0px;top:3.9px;font-size:26px;color:#101010;">2</div></div><div class="r" style="left:87.0px;top:312.0px;width:53.0px;height:40.0px;background:#ffffc8;border:2px solid;border-color:#a0a0a0 #fff #fff #a0a0a0;box-shadow:inset 2px 2px 0 #696969,inset -2px -2px 0 #e3e3e3;"></div><div class="r" style="left:91px;top:316px;width:45px;height:32px;overflow:hidden"><div class="t" style="left:2.0px;top:3.9px;font-size:26px;color:#101010;">34</div></div><div class="r" style="left:142.0px;top:312.0px;width:53.0px;height:40.0px;background:#ffffc8;border:2px solid;border-color:#a0a0a0 #fff #fff #a0a0a0;box-shadow:inset 2px 2px 0 #696969,inset -2px -2px 0 #e3e3e3;"></div><div class="r" style="left:146px;top:316px;width:45px;height:32px;overflow:hidden"><div class="t" style="left:2.0px;top:3.9px;font-size:26px;color:#101010;">13</div></div><div class="r" style="left:228.0px;top:312.0px;width:52.0px;height:40.0px;background:#ffffc8;border:2px solid;border-color:#a0a0a0 #fff #fff #a0a0a0;box-shadow:inset 2px 2px 0 #696969,inset -2px -2px 0 #e3e3e3;"></div><div class="r" style="left:232px;top:316px;width:44px;height:32px;overflow:hidden"><div class="t" style="left:2.0px;top:3.9px;font-size:26px;color:#101010;">37</div></div><div class="r" style="left:282.0px;top:312.0px;width:53.0px;height:40.0px;background:#ffffc8;border:2px solid;border-color:#a0a0a0 #fff #fff #a0a0a0;box-shadow:inset 2px 2px 0 #696969,inset -2px -2px 0 #e3e3e3;"></div><div class="r" style="left:286px;top:316px;width:45px;height:32px;overflow:hidden"><div class="t" style="left:2.0px;top:3.9px;font-size:26px;color:#101010;">18</div></div><div class="r" style="left:337.0px;top:312.0px;width:52.0px;height:40.0px;background:#ffffc8;border:2px solid;border-color:#a0a0a0 #fff #fff #a0a0a0;box-shadow:inset 2px 2px 0 #696969,inset -2px -2px 0 #e3e3e3;"></div><div class="r" style="left:341px;top:316px;width:44px;height:32px;overflow:hidden"><div class="t" style="left:2.0px;top:3.9px;font-size:26px;color:#101010;">20</div></div><div class="t" style="left:8.0px;top:364.3px;font-size:22px;color:#303030;transform:scaleX(1.0222);">X</div><div class="t" style="left:205.0px;top:364.3px;font-size:22px;color:#303030;transform:scaleX(0.9540);">Y</div><div class="r" style="left:33.0px;top:358.0px;width:52.0px;height:40.0px;background:#ffffc8;border:2px solid;border-color:#a0a0a0 #fff #fff #a0a0a0;box-shadow:inset 2px 2px 0 #696969,inset -2px -2px 0 #e3e3e3;"></div><div class="r" style="left:37px;top:362px;width:44px;height:32px;overflow:hidden"><div class="t" style="left:2.0px;top:3.9px;font-size:26px;color:#101010;">2</div></div><div class="r" style="left:87.0px;top:358.0px;width:53.0px;height:40.0px;background:#ffffc8;border:2px solid;border-color:#a0a0a0 #fff #fff #a0a0a0;box-shadow:inset 2px 2px 0 #696969,inset -2px -2px 0 #e3e3e3;"></div><div class="r" style="left:91px;top:362px;width:45px;height:32px;overflow:hidden"><div class="t" style="left:2.0px;top:3.9px;font-size:26px;color:#101010;">0</div></div><div class="r" style="left:142.0px;top:358.0px;width:53.0px;height:40.0px;background:#ffffc8;border:2px solid;border-color:#a0a0a0 #fff #fff #a0a0a0;box-shadow:inset 2px 2px 0 #696969,inset -2px -2px 0 #e3e3e3;"></div><div class="r" style="left:146px;top:362px;width:45px;height:32px;overflow:hidden"><div class="t" style="left:2.0px;top:3.9px;font-size:26px;color:#101010;">0</div></div><div class="r" style="left:228.0px;top:358.0px;width:52.0px;height:40.0px;background:#f0f0f0;border:2px solid;border-color:#a0a0a0 #fff #fff #a0a0a0;box-shadow:inset 2px 2px 0 #696969,inset -2px -2px 0 #e3e3e3;"></div><div class="r" style="left:282.0px;top:358.0px;width:53.0px;height:40.0px;background:#f0f0f0;border:2px solid;border-color:#a0a0a0 #fff #fff #a0a0a0;box-shadow:inset 2px 2px 0 #696969,inset -2px -2px 0 #e3e3e3;"></div><div class="r" style="left:337.0px;top:358.0px;width:52.0px;height:40.0px;background:#f0f0f0;border:2px solid;border-color:#a0a0a0 #fff #fff #a0a0a0;box-shadow:inset 2px 2px 0 #696969,inset -2px -2px 0 #e3e3e3;"></div><div class="r" style="left:2.0px;top:408.0px;width:390.0px;height:3.0px;background:#2a2aff;"></div><div class="r" style="left:2.0px;top:419.0px;width:344.0px;height:39.0px;background:#d0d0ff;border:2px solid;border-color:#a0a0a0 #fff #fff #a0a0a0;box-shadow:inset 2px 2px 0 #696969,inset -2px -2px 0 #e3e3e3;"></div><div class="r" style="left:6px;top:423px;width:336px;height:31px;overflow:hidden"><div class="t" style="left:2.0px;top:2.9px;font-size:26px;color:#961414;font-weight:bold;transform:scaleX(0.9688);">Star</div></div><div class="r" style="left:349.0px;top:420.0px;width:39.0px;height:37.0px;background:#f0f0f0;border:2px solid;border-color:#e3e3e3 #696969 #696969 #e3e3e3;box-shadow:inset 2px 2px 0 #fff,inset -2px -2px 0 #a0a0a0;"></div><div class="r" style="left:367.0px;top:428.0px;width:2.0px;height:19.0px;background:#202020;"></div><div class="t" style="left:8.0px;top:458.3px;font-size:22px;color:#101010;transform:scaleX(0.9272);">Catalogue</div><div class="r" style="left:2.0px;top:486.0px;width:309.0px;height:39.0px;background:#d0d0ff;border:2px solid;border-color:#a0a0a0 #fff #fff #a0a0a0;box-shadow:inset 2px 2px 0 #696969,inset -2px -2px 0 #e3e3e3;"></div><div class="r" style="left:6px;top:490px;width:301px;height:31px;overflow:hidden"><div class="t" style="left:2.0px;top:3.8px;font-size:25px;font-weight:bold;transform:scaleX(0.9986);">UCAC4</div></div><div class="r" style="left:314.0px;top:487.0px;width:36.0px;height:38.0px;background:#f0f0f0;border:2px solid;border-color:#e3e3e3 #696969 #696969 #e3e3e3;box-shadow:inset 2px 2px 0 #fff,inset -2px -2px 0 #a0a0a0;"></div><div class="r" style="left:350.0px;top:487.0px;width:38.0px;height:38.0px;background:#f0f0f0;border:2px solid;border-color:#e3e3e3 #696969 #696969 #e3e3e3;box-shadow:inset 2px 2px 0 #fff,inset -2px -2px 0 #a0a0a0;"></div><svg class="r" style="left:318px;top:492px;" width="28" height="28" viewBox="0 0 28 28"><path d="M3 3l8 8M25 3l-8 8M3 25l8-8M25 25l-8-8" stroke="#404040" stroke-width="2.5"/></svg><svg class="r" style="left:354px;top:492px;" width="28" height="28" viewBox="0 0 28 28"><path d="M3 3l8 8M25 3l-8 8M3 25l8-8M25 25l-8-8" stroke="#ff2a2a" stroke-width="2.5"/></svg><div class="t" style="left:8.0px;top:526.9px;font-size:22px;color:#101010;transform:scaleX(0.9213);">Designation in catalogue</div><div class="r" style="left:2.0px;top:553.0px;width:309.0px;height:41.0px;background:#c8d4ff;border:2px solid;border-color:#a0a0a0 #fff #fff #a0a0a0;box-shadow:inset 2px 2px 0 #696969,inset -2px -2px 0 #e3e3e3;"></div><div class="r" style="left:6px;top:557px;width:301px;height:33px;overflow:hidden"><div class="t" style="left:2.0px;top:4.4px;font-size:26px;color:#1c1c2c;transform:scaleX(0.9006);">637-037278</div></div><div class="r" style="left:314.0px;top:551.0px;width:74.0px;height:43.0px;background:#f0f0f0;border:2px solid;border-color:#e3e3e3 #696969 #696969 #e3e3e3;box-shadow:inset 2px 2px 0 #fff,inset -2px -2px 0 #a0a0a0;"></div><svg class="r" style="left:332px;top:557px;" width="40" height="32" viewBox="0 0 40 32"><path d="M6 12 Q6 4 14 4 H26 Q34 4 34 12 V24 H6Z" fill="#fff" stroke="#202020" stroke-width="2.5"/><rect x="16" y="3" width="8" height="8" fill="#202020"/><rect x="4" y="20" width="32" height="4" fill="#202020"/><rect x="8" y="24" width="4" height="6" fill="#202020"/><rect x="28" y="24" width="4" height="6" fill="#202020"/></svg><div class="t" style="left:8.0px;top:594.3px;font-size:22px;color:#101010;transform:scaleX(0.9086);">RA (J2000)</div><div class="t" style="left:202.0px;top:594.3px;font-size:22px;color:#101010;transform:scaleX(0.8807);">DE (J2000)</div><div class="r" style="left:3.0px;top:621.0px;width:192.0px;height:41.0px;background:#d0d0ff;border:2px solid;border-color:#a0a0a0 #fff #fff #a0a0a0;box-shadow:inset 2px 2px 0 #696969,inset -2px -2px 0 #e3e3e3;"></div><div class="r" style="left:7px;top:625.0px;width:184px;height:33.0px;overflow:hidden"><div class="t" style="left:2.0px;top:4.4px;font-size:26px;color:#1c1c2c;transform:scaleX(0.8902);">06h 46m 20.41s</div></div><div class="r" style="left:197.0px;top:621.0px;width:192.0px;height:41.0px;background:#d0d0ff;border:2px solid;border-color:#a0a0a0 #fff #fff #a0a0a0;box-shadow:inset 2px 2px 0 #696969,inset -2px -2px 0 #e3e3e3;"></div><div class="r" style="left:201px;top:625.0px;width:184px;height:33.0px;overflow:hidden"><div class="t" style="left:2.0px;top:4.4px;font-size:26px;color:#1c1c2c;transform:scaleX(0.8997);">+37° 18' 17.21''</div></div><div class="t" style="left:8.0px;top:662.4px;font-size:22px;color:#101010;transform:scaleX(0.9185);">Azimuth</div><div class="t" style="left:203.0px;top:662.4px;font-size:22px;color:#101010;transform:scaleX(0.9267);">Altitude</div><div class="r" style="left:3.0px;top:689.1px;width:156.0px;height:41.0px;background:#d4d4d0;border:2px solid;border-color:#a0a0a0 #fff #fff #a0a0a0;box-shadow:inset 2px 2px 0 #696969,inset -2px -2px 0 #e3e3e3;"></div><div class="r" style="left:7px;top:693.1px;width:148px;height:33.0px;overflow:hidden"><div class="t" style="left:2.0px;top:4.4px;font-size:26px;color:#961414;transform:scaleX(0.9030);">+275° 59' 05''</div></div><div class="r" style="left:162.0px;top:689.1px;width:32.0px;height:37.0px;background:#f0f0f0;border:2px solid;border-color:#e3e3e3 #696969 #696969 #e3e3e3;box-shadow:inset 2px 2px 0 #fff,inset -2px -2px 0 #a0a0a0;"></div><div class="r" style="left:176.0px;top:712.1px;width:3.0px;height:3.0px;background:#202020;"></div><div class="r" style="left:197.0px;top:689.1px;width:156.0px;height:41.0px;background:#d4d4d0;border:2px solid;border-color:#a0a0a0 #fff #fff #a0a0a0;box-shadow:inset 2px 2px 0 #696969,inset -2px -2px 0 #e3e3e3;"></div><div class="r" style="left:201px;top:693.1px;width:148px;height:33.0px;overflow:hidden"><div class="t" style="left:2.0px;top:4.4px;font-size:26px;color:#961414;transform:scaleX(0.8964);">+49° 37' 47''</div></div><div class="r" style="left:355.0px;top:689.1px;width:33.0px;height:37.0px;background:#f0f0f0;border:2px solid;border-color:#e3e3e3 #696969 #696969 #e3e3e3;box-shadow:inset 2px 2px 0 #fff,inset -2px -2px 0 #a0a0a0;"></div><div class="r" style="left:369.0px;top:712.1px;width:3.0px;height:3.0px;background:#202020;"></div><div class="t" style="left:8.0px;top:730.5px;font-size:22px;color:#101010;transform:scaleX(0.9370);">Hour Angle</div><div class="t" style="left:203.0px;top:730.5px;font-size:22px;color:#101010;transform:scaleX(0.9246);">Magnitude</div><div class="t" style="left:316.0px;top:730.5px;font-size:22px;color:#909090;transform:scaleX(0.9235);">S.T.</div><div class="r" style="left:3.0px;top:757.2px;width:192.0px;height:41.0px;background:#d4d4d0;border:2px solid;border-color:#a0a0a0 #fff #fff #a0a0a0;box-shadow:inset 2px 2px 0 #696969,inset -2px -2px 0 #e3e3e3;"></div><div class="r" style="left:7px;top:761.2px;width:184px;height:33.0px;overflow:hidden"><div class="t" style="left:2.0px;top:4.4px;font-size:26px;color:#961414;transform:scaleX(0.8821);">+03h 36m 20s</div></div><div class="r" style="left:197.0px;top:757.2px;width:114.0px;height:41.0px;background:#d0d0ff;border:2px solid;border-color:#a0a0a0 #fff #fff #a0a0a0;box-shadow:inset 2px 2px 0 #696969,inset -2px -2px 0 #e3e3e3;"></div><div class="r" style="left:201px;top:761.2px;width:106px;height:33.0px;overflow:hidden"><div class="t" style="left:2.0px;top:4.4px;font-size:26px;color:#1c1c2c;transform:scaleX(0.8551);">12.651</div></div><div class="r" style="left:312.0px;top:757.2px;width:77.0px;height:41.0px;background:#f0f0f0;border:2px solid;border-color:#a0a0a0 #fff #fff #a0a0a0;box-shadow:inset 2px 2px 0 #696969,inset -2px -2px 0 #e3e3e3;"></div><div class="t" style="left:8.0px;top:798.6px;font-size:22px;color:#101010;transform:scaleX(0.9032);">Rise (UT)</div><div class="t" style="left:138.0px;top:798.6px;font-size:22px;color:#101010;transform:scaleX(0.9012);">Transit (UT)</div><div class="t" style="left:266.0px;top:798.6px;font-size:22px;color:#101010;transform:scaleX(0.8903);">Set (UT)</div><div class="r" style="left:3.0px;top:825.3px;width:127.0px;height:41.0px;background:#d4d4d0;border:2px solid;border-color:#a0a0a0 #fff #fff #a0a0a0;box-shadow:inset 2px 2px 0 #696969,inset -2px -2px 0 #e3e3e3;"></div><div class="r" style="left:7px;top:829.3px;width:119px;height:33.0px;overflow:hidden"><div class="t" style="left:2.0px;top:4.4px;font-size:26px;color:#961414;transform:scaleX(0.9019);">11h01m</div></div><div class="r" style="left:133.0px;top:825.3px;width:126.0px;height:41.0px;background:#d4d4d0;border:2px solid;border-color:#a0a0a0 #fff #fff #a0a0a0;box-shadow:inset 2px 2px 0 #696969,inset -2px -2px 0 #e3e3e3;"></div><div class="r" style="left:137px;top:829.3px;width:118px;height:33.0px;overflow:hidden"><div class="t" style="left:2.0px;top:4.4px;font-size:26px;color:#961414;transform:scaleX(0.8727);">20h50m</div></div><div class="r" style="left:261.0px;top:825.3px;width:128.0px;height:41.0px;background:#d4d4d0;border:2px solid;border-color:#a0a0a0 #fff #fff #a0a0a0;box-shadow:inset 2px 2px 0 #696969,inset -2px -2px 0 #e3e3e3;"></div><div class="r" style="left:265px;top:829.3px;width:120px;height:33.0px;overflow:hidden"><div class="t" style="left:2.0px;top:4.4px;font-size:26px;color:#961414;transform:scaleX(0.8940);">06h43m</div></div><div class="t" style="left:8.0px;top:866.7px;font-size:22px;color:#101010;transform:scaleX(0.9505);">RA Epoch</div><div class="t" style="left:203.0px;top:866.7px;font-size:22px;color:#101010;transform:scaleX(0.9288);">DE Epoch</div><div class="r" style="left:3.0px;top:893.4px;width:192.0px;height:41.0px;background:#d0d0ff;border:2px solid;border-color:#a0a0a0 #fff #fff #a0a0a0;box-shadow:inset 2px 2px 0 #696969,inset -2px -2px 0 #e3e3e3;"></div><div class="r" style="left:7px;top:897.4px;width:184px;height:33.0px;overflow:hidden"><div class="t" style="left:2.0px;top:4.4px;font-size:26px;color:#1c1c2c;transform:scaleX(0.8938);">2001.04</div></div><div class="r" style="left:197.0px;top:893.4px;width:192.0px;height:41.0px;background:#d0d0ff;border:2px solid;border-color:#a0a0a0 #fff #fff #a0a0a0;box-shadow:inset 2px 2px 0 #696969,inset -2px -2px 0 #e3e3e3;"></div><div class="r" style="left:201px;top:897.4px;width:184px;height:33.0px;overflow:hidden"><div class="t" style="left:2.0px;top:4.4px;font-size:26px;color:#1c1c2c;transform:scaleX(0.8938);">2001.34</div></div><div class="t" style="left:8.0px;top:934.8px;font-size:22px;color:#101010;transform:scaleX(0.8819);">B, V, g, r and i Mags</div><div class="t" style="left:203.0px;top:934.8px;font-size:22px;color:#101010;transform:scaleX(0.8983);">J, H_Ks Mags</div><div class="r" style="left:3.0px;top:961.5px;width:192.0px;height:41.0px;background:#d0d0ff;border:2px solid;border-color:#a0a0a0 #fff #fff #a0a0a0;box-shadow:inset 2px 2px 0 #696969,inset -2px -2px 0 #e3e3e3;"></div><div class="r" style="left:7px;top:965.5px;width:184px;height:33.0px;overflow:hidden"><div class="t" style="left:2.0px;top:4.4px;font-size:26px;color:#1c1c2c;transform:scaleX(1.0079);">14.065 / 12.928 / 12.5</div></div><div class="r" style="left:197.0px;top:961.5px;width:192.0px;height:41.0px;background:#d0d0ff;border:2px solid;border-color:#a0a0a0 #fff #fff #a0a0a0;box-shadow:inset 2px 2px 0 #696969,inset -2px -2px 0 #e3e3e3;"></div><div class="r" style="left:201px;top:965.5px;width:184px;height:33.0px;overflow:hidden"><div class="t" style="left:2.0px;top:4.4px;font-size:26px;color:#1c1c2c;transform:scaleX(1.0079);">10.972 / 10.484 / 10.4</div></div><div class="t" style="left:8.0px;top:1002.9px;font-size:22px;color:#101010;transform:scaleX(0.9330);">JHKs cc_flg/ph_flg</div><div class="t" style="left:203.0px;top:1002.9px;font-size:22px;color:#101010;transform:scaleX(0.9057);">JHKs phot. Err.</div><div class="r" style="left:3.0px;top:1029.6px;width:192.0px;height:41.0px;background:#d0d0ff;border:2px solid;border-color:#a0a0a0 #fff #fff #a0a0a0;box-shadow:inset 2px 2px 0 #696969,inset -2px -2px 0 #e3e3e3;"></div><div class="r" style="left:7px;top:1033.6px;width:184px;height:33.0px;overflow:hidden"><div class="t" style="left:2.0px;top:4.4px;font-size:26px;color:#1c1c2c;transform:scaleX(0.9445);">0, 0, 0 / 5, 5, 5</div></div><div class="r" style="left:197.0px;top:1029.6px;width:192.0px;height:41.0px;background:#d0d0ff;border:2px solid;border-color:#a0a0a0 #fff #fff #a0a0a0;box-shadow:inset 2px 2px 0 #696969,inset -2px -2px 0 #e3e3e3;"></div><div class="r" style="left:201px;top:1033.6px;width:184px;height:33.0px;overflow:hidden"><div class="t" style="left:2.0px;top:4.4px;font-size:26px;color:#1c1c2c;transform:scaleX(1.0248);">0.02 / 0.02 / 0.02</div></div><div class="t" style="left:6.0px;top:1071.0px;font-size:22px;color:#101010;transform:scaleX(0.9060);">Object Type</div><div class="r" style="left:2.0px;top:1097.7px;width:385.0px;height:41.0px;background:#d0d0ff;border:2px solid;border-color:#a0a0a0 #fff #fff #a0a0a0;box-shadow:inset 2px 2px 0 #696969,inset -2px -2px 0 #e3e3e3;"></div><div class="r" style="left:6px;top:1101.6999999999998px;width:377px;height:33.0px;overflow:hidden"><div class="t" style="left:2.0px;top:4.4px;font-size:26px;color:#1c1c2c;transform:scaleX(0.8850);">0 - clean star</div></div><div class="t" style="left:8.0px;top:1139.1px;font-size:22px;color:#909090;transform:scaleX(0.8783);">Lumin.</div><div class="t" style="left:80.0px;top:1139.1px;font-size:22px;color:#101010;transform:scaleX(0.9142);">Mag. Error</div><div class="t" style="left:233.0px;top:1139.1px;font-size:22px;color:#101010;transform:scaleX(0.9091);">DST</div><div class="t" style="left:316.0px;top:1139.1px;font-size:22px;color:#101010;transform:scaleX(0.9091);">DSF</div><div class="r" style="left:3.0px;top:1165.8px;width:68.0px;height:41.0px;background:#f0f0f0;border:2px solid;border-color:#a0a0a0 #fff #fff #a0a0a0;box-shadow:inset 2px 2px 0 #696969,inset -2px -2px 0 #e3e3e3;"></div><div class="r" style="left:76.0px;top:1165.8px;width:146.0px;height:41.0px;background:#d0d0ff;border:2px solid;border-color:#a0a0a0 #fff #fff #a0a0a0;box-shadow:inset 2px 2px 0 #696969,inset -2px -2px 0 #e3e3e3;"></div><div class="r" style="left:80px;top:1169.8px;width:138px;height:33.0px;overflow:hidden"><div class="t" style="left:2.0px;top:4.4px;font-size:26px;color:#1c1c2c;transform:scaleX(0.9090);">0.07</div></div><div class="r" style="left:228.0px;top:1165.8px;width:78.0px;height:41.0px;background:#d0d0ff;border:2px solid;border-color:#a0a0a0 #fff #fff #a0a0a0;box-shadow:inset 2px 2px 0 #696969,inset -2px -2px 0 #e3e3e3;"></div><div class="r" style="left:232px;top:1169.8px;width:70px;height:33.0px;overflow:hidden"><div class="t" style="left:2.0px;top:4.4px;font-size:26px;color:#1c1c2c;transform:scaleX(0.8990);">0</div></div><div class="r" style="left:311.0px;top:1165.8px;width:74.0px;height:41.0px;background:#d0d0ff;border:2px solid;border-color:#a0a0a0 #fff #fff #a0a0a0;box-shadow:inset 2px 2px 0 #696969,inset -2px -2px 0 #e3e3e3;"></div><div class="r" style="left:315px;top:1169.8px;width:66px;height:33.0px;overflow:hidden"><div class="t" style="left:2.0px;top:4.4px;font-size:26px;color:#1c1c2c;transform:scaleX(0.8990);">0</div></div><div class="t" style="left:8.0px;top:1207.2px;font-size:22px;color:#101010;transform:scaleX(0.9274);">Fit M.</div><div class="t" style="left:80.0px;top:1207.2px;font-size:22px;color:#101010;transform:scaleX(0.9344);">Aper.</div><div class="t" style="left:155.0px;top:1207.2px;font-size:22px;color:#909090;transform:scaleX(0.8922);">Surf.B.</div><div class="t" style="left:228.0px;top:1207.2px;font-size:22px;color:#101010;transform:scaleX(0.9471);">RA Err.</div><div class="t" style="left:312.0px;top:1207.2px;font-size:22px;color:#101010;transform:scaleX(0.8886);">DE Err.</div><div class="r" style="left:3.0px;top:1233.9px;width:68.0px;height:41.0px;background:#d0d0ff;border:2px solid;border-color:#a0a0a0 #fff #fff #a0a0a0;box-shadow:inset 2px 2px 0 #696969,inset -2px -2px 0 #e3e3e3;"></div><div class="r" style="left:7px;top:1237.9px;width:60px;height:33.0px;overflow:hidden"><div class="t" style="left:2.0px;top:4.4px;font-size:26px;color:#1c1c2c;transform:scaleX(0.9068);">12.65</div></div><div class="r" style="left:76.0px;top:1233.9px;width:68.0px;height:41.0px;background:#d0d0ff;border:2px solid;border-color:#a0a0a0 #fff #fff #a0a0a0;box-shadow:inset 2px 2px 0 #696969,inset -2px -2px 0 #e3e3e3;"></div><div class="r" style="left:80px;top:1237.9px;width:60px;height:33.0px;overflow:hidden"><div class="t" style="left:2.0px;top:4.4px;font-size:26px;color:#1c1c2c;transform:scaleX(0.9068);">12.62</div></div><div class="r" style="left:149.0px;top:1233.9px;width:70.0px;height:41.0px;background:#f0f0f0;border:2px solid;border-color:#a0a0a0 #fff #fff #a0a0a0;box-shadow:inset 2px 2px 0 #696969,inset -2px -2px 0 #e3e3e3;"></div><div class="r" style="left:224.0px;top:1233.9px;width:78.0px;height:41.0px;background:#d0d0ff;border:2px solid;border-color:#a0a0a0 #fff #fff #a0a0a0;box-shadow:inset 2px 2px 0 #696969,inset -2px -2px 0 #e3e3e3;"></div><div class="r" style="left:228px;top:1237.9px;width:70px;height:33.0px;overflow:hidden"><div class="t" style="left:2.0px;top:4.4px;font-size:26px;color:#1c1c2c;transform:scaleX(0.8644);">13</div></div><div class="r" style="left:307.0px;top:1233.9px;width:78.0px;height:41.0px;background:#d0d0ff;border:2px solid;border-color:#a0a0a0 #fff #fff #a0a0a0;box-shadow:inset 2px 2px 0 #696969,inset -2px -2px 0 #e3e3e3;"></div><div class="r" style="left:311px;top:1237.9px;width:70px;height:33.0px;overflow:hidden"><div class="t" style="left:2.0px;top:4.4px;font-size:26px;color:#1c1c2c;transform:scaleX(0.8644);">13</div></div><div class="t" style="left:8.0px;top:1275.3px;font-size:22px;color:#101010;transform:scaleX(0.9391);">RA pm</div><div class="t" style="left:106.0px;top:1275.3px;font-size:22px;color:#101010;transform:scaleX(0.9072);">DE pm</div><div class="t" style="left:207.0px;top:1275.3px;font-size:22px;color:#101010;transform:scaleX(0.9136);">Er RA pm</div><div class="t" style="left:307.0px;top:1275.3px;font-size:22px;color:#101010;transform:scaleX(0.9019);">Er DE pm</div><div class="r" style="left:3.0px;top:1302.0px;width:95.0px;height:41.0px;background:#d0d0ff;border:2px solid;border-color:#a0a0a0 #fff #fff #a0a0a0;box-shadow:inset 2px 2px 0 #696969,inset -2px -2px 0 #e3e3e3;"></div><div class="r" style="left:7px;top:1306.0px;width:87px;height:33.0px;overflow:hidden"><div class="t" style="left:2.0px;top:4.4px;font-size:26px;color:#1c1c2c;transform:scaleX(0.8300);">15.1</div></div><div class="r" style="left:101.0px;top:1302.0px;width:95.0px;height:41.0px;background:#d0d0ff;border:2px solid;border-color:#a0a0a0 #fff #fff #a0a0a0;box-shadow:inset 2px 2px 0 #696969,inset -2px -2px 0 #e3e3e3;"></div><div class="r" style="left:105px;top:1306.0px;width:87px;height:33.0px;overflow:hidden"><div class="t" style="left:2.0px;top:4.4px;font-size:26px;color:#1c1c2c;transform:scaleX(0.8943);">-21.4</div></div><div class="r" style="left:201.0px;top:1302.0px;width:96.0px;height:41.0px;background:#d0d0ff;border:2px solid;border-color:#a0a0a0 #fff #fff #a0a0a0;box-shadow:inset 2px 2px 0 #696969,inset -2px -2px 0 #e3e3e3;"></div><div class="r" style="left:205px;top:1306.0px;width:88px;height:33.0px;overflow:hidden"><div class="t" style="left:2.0px;top:4.4px;font-size:26px;color:#1c1c2c;transform:scaleX(0.8853);">1.8</div></div><div class="r" style="left:303.0px;top:1302.0px;width:86.0px;height:41.0px;background:#d0d0ff;border:2px solid;border-color:#a0a0a0 #fff #fff #a0a0a0;box-shadow:inset 2px 2px 0 #696969,inset -2px -2px 0 #e3e3e3;"></div><div class="r" style="left:307px;top:1306.0px;width:78px;height:33.0px;overflow:hidden"><div class="t" style="left:2.0px;top:4.4px;font-size:26px;color:#1c1c2c;transform:scaleX(0.9130);">2.2</div></div><div class="t" style="left:8.0px;top:1343.4px;font-size:22px;color:#101010;transform:scaleX(0.9229);">Other Information</div><div class="r" style="left:2.0px;top:1368.0px;width:387.0px;height:158.0px;background:#d0d0ff;border:2px solid;border-color:#a0a0a0 #fff #fff #a0a0a0;box-shadow:inset 2px 2px 0 #696969,inset -2px -2px 0 #e3e3e3;"></div><div class="r" style="left:350.0px;top:1370.0px;width:37.0px;height:154.0px;background:#f0f0f0;"></div><div class="r" style="left:352.0px;top:1410.0px;width:33.0px;height:37.0px;background:#cdcdcd;"></div><svg class="r" style="left:356px;top:1384px;" width="24" height="14" viewBox="0 0 24 14"><path d="M3 11 L12 3 L21 11" fill="none" stroke="#606060" stroke-width="3"/></svg><svg class="r" style="left:356px;top:1497px;" width="24" height="14" viewBox="0 0 24 14"><path d="M3 3 L12 11 L21 3" fill="none" stroke="#606060" stroke-width="3"/></svg><div class="t" style="left:10.0px;top:1376.7px;font-size:21px;color:#1a1a28;transform:scaleX(0.9251);">RA (eq. date):  06h 47m 54.49s</div><div class="t" style="left:10.0px;top:1400.5px;font-size:21px;color:#1a1a28;transform:scaleX(0.8740);">DE (eq. date):  +37° 16' 42.65''</div><div class="t" style="left:10.0px;top:1424.2px;font-size:21px;color:#1a1a28;transform:scaleX(0.9435);">Double Star Flag: single star</div><div class="t" style="left:10.0px;top:1448.1px;font-size:21px;color:#1a1a28;transform:scaleX(0.9512);">Double Star Type: No double star</div><div class="t" style="left:10.0px;top:1471.9px;font-size:21px;color:#1a1a28;transform:scaleX(0.9767);">Total # of CCD images: 6</div><div class="t" style="left:10.0px;top:1495.7px;font-size:21px;color:#1a1a28;transform:scaleX(0.9548);"># of CCD images used: 6</div><div class="r" style="left:1.0px;top:1631.0px;width:2659.0px;height:49.0px;background:#f0f0f0;"></div><div class="r" style="left:1.0px;top:1631.0px;width:2659.0px;height:3.0px;background:#fbfbfb;"></div><div class="r" style="left:4.0px;top:1638.0px;width:384.0px;height:38.0px;background:#f0f0f0;border-top:3px solid #8a8a8a;border-left:3px solid #8a8a8a;border-bottom:2px solid #fafafa;border-right:2px solid #fafafa;box-sizing:border-box;"></div><div class="t" style="left:10.0px;top:1648.5px;font-size:23px;color:#1a1a1a;transform:scaleX(1.0077);">Ready</div><div class="t" style="left:396.0px;top:1645.8px;font-size:25px;color:#1a1a1a;transform:scaleX(0.8878);">RA:</div><div class="r" style="left:438.0px;top:1639.0px;width:43.0px;height:39.0px;background:#f0f0f0;border:2px solid;border-color:#a0a0a0 #fff #fff #a0a0a0;box-shadow:inset 2px 2px 0 #696969,inset -2px -2px 0 #e3e3e3;"></div><div class="t" style="left:444.0px;top:1645.8px;font-size:25px;color:#961414;transform:scaleX(1.1148);">06</div><div class="r" style="left:481.5px;top:1639.0px;width:39.5px;height:39.0px;background:#f0f0f0;border:2px solid;border-color:#a0a0a0 #fff #fff #a0a0a0;box-shadow:inset 2px 2px 0 #696969,inset -2px -2px 0 #e3e3e3;"></div><div class="t" style="left:487.5px;top:1645.8px;font-size:25px;color:#961414;transform:scaleX(0.9889);">46</div><div class="r" style="left:521.0px;top:1639.0px;width:40.0px;height:39.0px;background:#f0f0f0;border:2px solid;border-color:#a0a0a0 #fff #fff #a0a0a0;box-shadow:inset 2px 2px 0 #696969,inset -2px -2px 0 #e3e3e3;"></div><div class="t" style="left:527.0px;top:1645.8px;font-size:25px;color:#961414;transform:scaleX(1.0069);">20</div><div class="t" style="left:572.0px;top:1645.8px;font-size:25px;color:#1a1a1a;transform:scaleX(0.9358);">DE:</div><div class="r" style="left:614.5px;top:1639.0px;width:54.5px;height:39.0px;background:#f0f0f0;border:2px solid;border-color:#a0a0a0 #fff #fff #a0a0a0;box-shadow:inset 2px 2px 0 #696969,inset -2px -2px 0 #e3e3e3;"></div><div class="t" style="left:620.5px;top:1645.8px;font-size:25px;color:#961414;transform:scaleX(1.0022);">+37</div><div class="r" style="left:669.0px;top:1639.0px;width:42.0px;height:39.0px;background:#f0f0f0;border:2px solid;border-color:#a0a0a0 #fff #fff #a0a0a0;box-shadow:inset 2px 2px 0 #696969,inset -2px -2px 0 #e3e3e3;"></div><div class="t" style="left:675.0px;top:1645.8px;font-size:25px;color:#961414;transform:scaleX(1.0788);">18</div><div class="r" style="left:711.0px;top:1639.0px;width:39.0px;height:39.0px;background:#f0f0f0;border:2px solid;border-color:#a0a0a0 #fff #fff #a0a0a0;box-shadow:inset 2px 2px 0 #696969,inset -2px -2px 0 #e3e3e3;"></div><div class="t" style="left:717.0px;top:1645.8px;font-size:25px;color:#961414;transform:scaleX(0.9709);">17</div><div class="t" style="left:757.0px;top:1645.8px;font-size:25px;color:#1a1a1a;transform:scaleX(0.8506);">Field:</div><div class="r" style="left:816.0px;top:1639.0px;width:53.5px;height:39.0px;background:#f0f0f0;border:2px solid;border-color:#a0a0a0 #fff #fff #a0a0a0;box-shadow:inset 2px 2px 0 #696969,inset -2px -2px 0 #e3e3e3;"></div><div class="t" style="left:835.5px;top:1645.8px;font-size:25px;color:#961414;transform:scaleX(1.0069);">01</div><div class="r" style="left:869.5px;top:1639.0px;width:40.5px;height:39.0px;background:#f0f0f0;border:2px solid;border-color:#a0a0a0 #fff #fff #a0a0a0;box-shadow:inset 2px 2px 0 #696969,inset -2px -2px 0 #e3e3e3;"></div><div class="t" style="left:876.0px;top:1645.8px;font-size:25px;color:#961414;transform:scaleX(1.0069);">00</div><div class="r" style="left:910.0px;top:1639.0px;width:41.0px;height:39.0px;background:#f0f0f0;border:2px solid;border-color:#a0a0a0 #fff #fff #a0a0a0;box-shadow:inset 2px 2px 0 #696969,inset -2px -2px 0 #e3e3e3;"></div><div class="t" style="left:917.0px;top:1645.8px;font-size:25px;color:#961414;transform:scaleX(1.0069);">00</div><svg class="r" style="left:958px;top:1642px;" width="66" height="34" viewBox="0 0 66 34"><defs><radialGradient id="gb" cx="0.35" cy="0.3" r="0.7"><stop offset="0" stop-color="#c0ffc0"/><stop offset="0.35" stop-color="#00e000"/><stop offset="1" stop-color="#008000"/></radialGradient></defs><circle cx="16.5" cy="16" r="13.5" fill="url(#gb)"/><circle cx="47" cy="16" r="14" fill="url(#gb)"/></svg><div class="r" style="left:1030.0px;top:1636.0px;width:227.0px;height:23.0px;background:#ff0000;"></div><div class="t" style="left:1031.0px;top:1636.8px;font-size:22px;color:#ffee70;font-weight:bold;transform:scaleX(1.0622);">02/10/2023 00:29:26</div><div class="t" style="left:1058.0px;top:1660.4px;font-size:16px;color:#202020;transform:scaleX(1.0432);">+8°28'23'' / +47°20'31''</div><svg class="r" style="left:1262px;top:1634px;" width="44" height="42" viewBox="0 0 44 42"><circle cx="20" cy="20" r="18" fill="#ffff90"/><path d="M33 6 Q44 20 33 34" fill="none" stroke="#4040a0" stroke-width="2.5"/></svg><svg class="r" style="left:1322px;top:1630px;" width="126" height="48" viewBox="0 0 126 48"><path d="M4 10h118M4 30h118" stroke="#a0a0a0" stroke-width="2"/><path d="M4 12h118M4 32h118" stroke="#fff" stroke-width="1"/><rect x="62" y="3" width="4" height="14" fill="#808080"/><rect x="10" y="24" width="4" height="16" fill="#808080"/></svg><div class="r" style="left:1465.5px;top:1635.5px;width:41.5px;height:40.0px;background:#c0ffc0;border:2px solid;border-color:#e3e3e3 #696969 #696969 #e3e3e3;box-shadow:inset 2px 2px 0 #fff,inset -2px -2px 0 #a0a0a0;"></div><div class="r" style="left:1507.5px;top:1635.5px;width:40.5px;height:40.0px;background:#c0ffc0;border:2px solid;border-color:#e3e3e3 #696969 #696969 #e3e3e3;box-shadow:inset 2px 2px 0 #fff,inset -2px -2px 0 #a0a0a0;"></div><svg class="r" style="left:1475px;top:1644px;" width="22" height="22" viewBox="0 0 22 22"><path d="M11 2v18M2 11h18" stroke="#1010a0" stroke-width="4"/></svg><svg class="r" style="left:1517px;top:1644px;" width="22" height="22" viewBox="0 0 22 22"><path d="M2 11h18" stroke="#1010a0" stroke-width="4"/></svg><div class="r" style="left:1552.5px;top:1635.0px;width:181.5px;height:43.0px;background:#d8d8d8;"></div><div class="t" style="left:1556.0px;top:1638.5px;font-size:20px;color:#961414;transform:scaleX(0.9737);">JD: 2459985.52044</div><div class="t" style="left:1556.0px;top:1658.0px;font-size:20px;color:#961414;transform:scaleX(0.8993);">ST: 10:22:41</div><div class="r" style="left:2390.0px;top:1638.0px;width:264.0px;height:38.0px;background:#f0f0f0;border-top:3px solid #8a8a8a;border-left:3px solid #8a8a8a;border-bottom:2px solid #fafafa;border-right:2px solid #fafafa;box-sizing:border-box;"></div><div class="t" style="left:2398.0px;top:1647.8px;font-size:25px;color:#2a6a2a;transform:scaleX(0.9292);">06h48m32s  +37°36'30''</div><div class="r" style="left:394.0px;top:219.0px;width:2266.0px;height:1416.0px;background:#000;border:2px solid;border-color:#a0a0a0 #fff #fff #a0a0a0;box-shadow:inset 2px 2px 0 #696969,inset -2px -2px 0 #e3e3e3;"></div><svg class="r" style="left:0px;top:0px;pointer-events:none;" width="2662" height="1680" viewBox="0 0 2662 1680"><defs><clipPath id="sc"><rect x="398" y="223" width="2258" height="1407"/></clipPath><clipPath id="pc"><rect x="398" y="227" width="2248" height="1403"/></clipPath><clipPath id="sc2"><rect x="398" y="223" width="2247" height="1407"/></clipPath></defs><g clip-path="url(#sc)" font-family="Liberation Sans"><path d="M405.5 293V1629M468 227.5H2646.5V1629M405.5 1629H2646.5" stroke="#800000" stroke-width="2" fill="none"/><path d="M556 227V461M558.5 461V834M561 834V1208M563 1208V1580M565 1580V1629M780.5 227V461M782 461V833M784.3 833V1392M786 1392V1629M1003 227V273M1004.6 273V736M1006 736V1018M1007.3 1018V1629M1228 227V1203M1230.5 1203V1629M1451.5 227V1629M1674.4 227V1629M1899.3 227V270M1897.6 270V1389M1895 1389V1629M2123 227V458M2121 458V1018M2118.5 1018V1629M2346 227V458M2344.3 458V1018M2341.8 1018V1390M2339.4 1390V1629M2570.5 227V271M2569 271V646M2567 646V834M2565 834V1208M2562.5 1208V1580M2560 1580V1629M468 248H925M925 246H2155M2155 248H2646M406 621.5H813M813 619.5H2266M2266 621.5H2646M406 995H704M704 993H2375M2375 995H2646M406 1368.5H594M594 1367H1151M1151 1365.5H1929M1929 1367H2485M2485 1369H2646" stroke="#7a7a7a" stroke-width="2" fill="none"/><circle cx="1526" cy="928" r="1120" stroke="#8a008a" stroke-width="2.2" fill="none" clip-path="url(#pc)"/><rect x="751.5" y="341.5" width="1548.5" height="1172" stroke="#ff0000" stroke-width="3" fill="none"/><path d="M1337.4 240.3h2.6v2.6h-2.6zM2256.7 644.7h2.6v2.6h-2.6zM1228.9 497.5h2.6v2.6h-2.6zM1673.5 452.7h2.6v2.6h-2.6zM679.6 833.0h2.6v2.6h-2.6zM1664.7 470.4h2.6v2.6h-2.6zM1644.7 723.6h2.6v2.6h-2.6zM2555.6 354.0h2.6v2.6h-2.6zM2601.9 803.8h2.6v2.6h-2.6zM1533.9 433.7h2.6v2.6h-2.6zM2017.7 492.3h2.6v2.6h-2.6zM1168.5 259.0h2.6v2.6h-2.6zM1163.9 1582.4h2.6v2.6h-2.6zM2602.3 1269.8h2.6v2.6h-2.6zM407.8 1544.2h2.6v2.6h-2.6zM2359.2 1306.7h2.6v2.6h-2.6zM802.5 365.5h2.6v2.6h-2.6zM1332.7 1467.5h2.6v2.6h-2.6zM1700.7 1258.7h2.6v2.6h-2.6zM923.4 960.1h2.6v2.6h-2.6zM1996.1 1382.4h2.6v2.6h-2.6zM2216.0 551.7h2.6v2.6h-2.6zM2364.7 529.4h2.6v2.6h-2.6zM2204.3 1004.2h2.6v2.6h-2.6zM818.1 1051.2h2.6v2.6h-2.6zM1566.0 1570.0h2.6v2.6h-2.6zM493.5 456.1h2.6v2.6h-2.6zM2612.4 1392.8h2.6v2.6h-2.6zM738.1 547.2h2.6v2.6h-2.6zM1613.1 446.1h2.6v2.6h-2.6zM1128.5 295.1h2.6v2.6h-2.6zM2001.3 336.1h2.6v2.6h-2.6zM2637.9 1516.6h2.6v2.6h-2.6zM2174.9 1308.9h2.6v2.6h-2.6zM1227.4 1177.5h2.6v2.6h-2.6zM2112.8 900.0h2.6v2.6h-2.6zM538.4 1103.8h2.6v2.6h-2.6zM1133.0 1081.3h2.6v2.6h-2.6zM1346.9 1561.4h2.6v2.6h-2.6zM853.6 1303.9h2.6v2.6h-2.6zM1971.8 1006.3h2.6v2.6h-2.6zM580.1 457.3h2.6v2.6h-2.6zM2576.4 549.4h2.6v2.6h-2.6zM768.0 630.2h2.6v2.6h-2.6zM1608.5 954.5h2.6v2.6h-2.6zM407.5 230.5h2.6v2.6h-2.6zM1516.1 485.2h2.6v2.6h-2.6zM1766.9 1345.4h2.6v2.6h-2.6zM615.7 934.2h2.6v2.6h-2.6zM1313.8 1334.2h2.6v2.6h-2.6zM2548.3 810.2h2.6v2.6h-2.6zM947.4 1457.6h2.6v2.6h-2.6zM461.4 689.3h2.6v2.6h-2.6zM1288.2 475.5h2.6v2.6h-2.6zM1929.9 952.6h2.6v2.6h-2.6zM960.1 805.4h2.6v2.6h-2.6zM1956.7 681.6h2.6v2.6h-2.6zM552.3 871.6h2.6v2.6h-2.6zM838.9 1097.1h2.6v2.6h-2.6zM854.3 415.3h2.6v2.6h-2.6zM2411.4 689.1h2.6v2.6h-2.6zM1057.7 980.6h2.6v2.6h-2.6zM1960.1 1166.7h2.6v2.6h-2.6zM2196.4 590.4h2.6v2.6h-2.6zM1360.5 736.3h2.6v2.6h-2.6zM1562.5 1030.8h2.6v2.6h-2.6zM1815.9 321.3h2.6v2.6h-2.6zM1235.2 1219.4h2.6v2.6h-2.6zM479.5 1272.2h2.6v2.6h-2.6zM1943.3 789.3h2.6v2.6h-2.6zM1410.6 596.6h2.6v2.6h-2.6zM2058.7 899.5h2.6v2.6h-2.6zM996.5 267.2h2.6v2.6h-2.6zM1176.4 1517.2h2.6v2.6h-2.6zM1921.3 1103.1h2.6v2.6h-2.6zM2501.2 268.9h2.6v2.6h-2.6zM1755.5 489.5h2.6v2.6h-2.6zM1293.1 480.9h2.6v2.6h-2.6zM1185.5 1489.7h2.6v2.6h-2.6zM2032.1 1412.5h2.6v2.6h-2.6zM569.8 647.8h2.6v2.6h-2.6zM2164.4 282.7h2.6v2.6h-2.6zM826.9 340.8h2.6v2.6h-2.6zM2239.5 551.6h2.6v2.6h-2.6zM1354.7 245.4h2.6v2.6h-2.6zM655.7 946.6h2.6v2.6h-2.6zM2180.4 704.1h2.6v2.6h-2.6zM1118.5 283.2h2.6v2.6h-2.6zM624.1 434.2h2.6v2.6h-2.6zM864.1 1024.9h2.6v2.6h-2.6zM1207.5 1596.8h2.6v2.6h-2.6zM1039.2 1426.5h2.6v2.6h-2.6zM606.5 965.7h2.6v2.6h-2.6zM1636.3 1147.5h2.6v2.6h-2.6zM1322.8 960.6h2.6v2.6h-2.6zM2150.1 438.5h2.6v2.6h-2.6zM1596.1 1050.5h2.6v2.6h-2.6zM2158.8 455.5h2.6v2.6h-2.6zM1332.8 260.4h2.6v2.6h-2.6zM1890.8 1443.0h2.6v2.6h-2.6zM1195.4 1370.4h2.6v2.6h-2.6zM1880.6 249.9h2.6v2.6h-2.6zM1458.0 290.1h2.6v2.6h-2.6zM1104.7 1348.5h2.6v2.6h-2.6zM682.3 1018.6h2.6v2.6h-2.6zM527.6 380.0h2.6v2.6h-2.6zM2542.4 361.2h2.6v2.6h-2.6zM791.8 1544.0h2.6v2.6h-2.6zM1094.9 529.5h2.6v2.6h-2.6zM617.0 926.0h2.6v2.6h-2.6zM532.5 534.5h2.6v2.6h-2.6zM899.8 1270.7h2.6v2.6h-2.6zM764.8 1050.6h2.6v2.6h-2.6zM943.8 1619.3h2.6v2.6h-2.6zM2628.9 1521.2h2.6v2.6h-2.6zM2425.2 1002.3h2.6v2.6h-2.6zM2494.4 1123.1h2.6v2.6h-2.6zM758.6 1252.8h2.6v2.6h-2.6zM2310.9 246.3h2.6v2.6h-2.6zM838.6 1325.6h2.6v2.6h-2.6zM2128.1 1011.9h2.6v2.6h-2.6zM675.2 597.9h2.6v2.6h-2.6zM930.4 1600.8h2.6v2.6h-2.6zM907.0 744.9h2.6v2.6h-2.6zM1950.3 1155.8h2.6v2.6h-2.6zM1664.9 1138.2h2.6v2.6h-2.6zM2346.3 1507.4h2.6v2.6h-2.6zM644.0 268.2h2.6v2.6h-2.6zM2455.6 1502.2h2.6v2.6h-2.6zM1228.0 786.4h2.6v2.6h-2.6zM1941.0 817.0h2.6v2.6h-2.6zM649.8 575.4h2.6v2.6h-2.6zM1083.4 1019.8h2.6v2.6h-2.6zM785.2 1247.5h2.6v2.6h-2.6zM2582.0 765.6h2.6v2.6h-2.6zM1683.2 1118.0h2.6v2.6h-2.6zM2195.5 1108.0h2.6v2.6h-2.6zM1562.2 1236.1h2.6v2.6h-2.6zM453.4 1543.6h2.6v2.6h-2.6zM2421.9 1198.7h2.6v2.6h-2.6zM853.6 1103.1h2.6v2.6h-2.6zM463.3 783.6h2.6v2.6h-2.6zM884.6 1012.9h2.6v2.6h-2.6zM963.5 355.4h2.6v2.6h-2.6zM2186.2 578.3h2.6v2.6h-2.6zM1659.3 249.2h2.6v2.6h-2.6zM1667.8 1332.5h2.6v2.6h-2.6zM2166.2 686.4h2.6v2.6h-2.6zM688.9 1080.5h2.6v2.6h-2.6zM1089.6 626.7h2.6v2.6h-2.6zM872.8 777.4h2.6v2.6h-2.6zM1935.0 789.0h2.6v2.6h-2.6zM1854.5 1246.4h2.6v2.6h-2.6zM2223.3 1026.2h2.6v2.6h-2.6zM2628.2 929.9h2.6v2.6h-2.6zM1608.7 1149.0h2.6v2.6h-2.6zM2585.4 1210.1h2.6v2.6h-2.6zM2462.9 448.4h2.6v2.6h-2.6zM1349.5 1212.3h2.6v2.6h-2.6zM2048.6 1389.7h2.6v2.6h-2.6zM999.3 667.2h2.6v2.6h-2.6zM1328.6 776.1h2.6v2.6h-2.6zM608.6 772.4h2.6v2.6h-2.6zM1845.4 1262.7h2.6v2.6h-2.6zM917.2 1096.2h2.6v2.6h-2.6zM2090.0 444.0h2.6v2.6h-2.6zM432.2 450.5h2.6v2.6h-2.6zM1927.6 1506.5h2.6v2.6h-2.6zM1271.3 663.4h2.6v2.6h-2.6zM1811.3 669.3h2.6v2.6h-2.6zM488.2 569.9h2.6v2.6h-2.6zM1751.2 867.8h2.6v2.6h-2.6zM1180.5 775.8h2.6v2.6h-2.6zM708.5 1301.9h2.6v2.6h-2.6zM1241.6 1193.3h2.6v2.6h-2.6zM1677.5 1488.0h2.6v2.6h-2.6zM2192.0 411.5h2.6v2.6h-2.6zM1415.7 241.6h2.6v2.6h-2.6zM2099.0 549.5h2.6v2.6h-2.6zM2597.3 542.0h2.6v2.6h-2.6zM1543.5 915.2h2.6v2.6h-2.6zM2261.5 1060.4h2.6v2.6h-2.6zM2382.5 674.1h2.6v2.6h-2.6zM619.3 486.4h2.6v2.6h-2.6zM504.1 1217.7h2.6v2.6h-2.6zM1943.6 1284.0h2.6v2.6h-2.6zM2157.0 401.5h2.6v2.6h-2.6zM544.3 1150.0h2.6v2.6h-2.6zM402.6 698.6h2.6v2.6h-2.6zM1722.2 1140.7h2.6v2.6h-2.6zM1785.1 1557.0h2.6v2.6h-2.6zM2592.9 661.4h2.6v2.6h-2.6zM1108.7 256.0h2.6v2.6h-2.6zM672.4 840.3h2.6v2.6h-2.6zM1843.9 556.4h2.6v2.6h-2.6zM623.7 1186.3h2.6v2.6h-2.6zM1912.5 927.5h2.6v2.6h-2.6zM717.1 502.1h2.6v2.6h-2.6zM1003.2 1421.6h2.6v2.6h-2.6zM2483.8 292.1h2.6v2.6h-2.6zM2507.7 1505.6h2.6v2.6h-2.6zM2183.9 553.1h2.6v2.6h-2.6zM2575.7 1359.7h2.6v2.6h-2.6zM713.6 276.2h2.6v2.6h-2.6zM1250.5 1038.5h2.6v2.6h-2.6zM455.5 1564.4h2.6v2.6h-2.6zM1913.8 950.4h2.6v2.6h-2.6zM1506.9 372.9h2.6v2.6h-2.6zM2082.5 1265.6h2.6v2.6h-2.6zM450.5 1357.4h2.6v2.6h-2.6zM1197.2 1534.2h2.6v2.6h-2.6zM1169.7 523.0h2.6v2.6h-2.6zM840.6 690.8h2.6v2.6h-2.6zM559.2 453.8h2.6v2.6h-2.6zM1463.2 1000.2h2.6v2.6h-2.6zM1654.4 411.1h2.6v2.6h-2.6zM455.4 431.7h2.6v2.6h-2.6zM2423.8 417.2h2.6v2.6h-2.6zM1938.2 1004.8h2.6v2.6h-2.6zM1750.2 1539.5h2.6v2.6h-2.6zM975.2 1211.0h2.6v2.6h-2.6zM1564.5 742.7h2.6v2.6h-2.6zM1302.5 509.7h2.6v2.6h-2.6zM626.9 1517.7h2.6v2.6h-2.6zM1840.7 464.1h2.6v2.6h-2.6zM2207.0 485.0h2.6v2.6h-2.6zM1890.1 1048.5h2.6v2.6h-2.6zM2192.7 804.0h2.6v2.6h-2.6zM2549.2 1234.2h2.6v2.6h-2.6zM1410.7 395.7h2.6v2.6h-2.6zM980.7 411.6h2.6v2.6h-2.6zM1572.6 1355.8h2.6v2.6h-2.6zM2069.9 1119.2h2.6v2.6h-2.6zM1360.4 616.4h2.6v2.6h-2.6zM2208.7 1167.0h2.6v2.6h-2.6zM1893.1 1008.6h2.6v2.6h-2.6zM2179.0 1051.6h2.6v2.6h-2.6zM992.5 749.7h2.6v2.6h-2.6zM1096.9 634.9h2.6v2.6h-2.6zM2421.4 1223.6h2.6v2.6h-2.6zM1780.7 858.2h2.6v2.6h-2.6zM1492.1 373.4h2.6v2.6h-2.6zM1467.7 1050.1h2.6v2.6h-2.6zM1188.1 937.1h2.6v2.6h-2.6zM2648.4 1506.0h2.6v2.6h-2.6zM573.3 1552.3h2.6v2.6h-2.6zM2187.6 1364.8h2.6v2.6h-2.6zM2210.4 518.5h2.6v2.6h-2.6zM697.0 1126.0h2.6v2.6h-2.6zM2262.7 369.0h2.6v2.6h-2.6zM432.4 1553.7h2.6v2.6h-2.6zM2447.5 592.5h2.6v2.6h-2.6zM2265.4 644.6h2.6v2.6h-2.6zM2293.4 244.2h2.6v2.6h-2.6zM1768.9 541.1h2.6v2.6h-2.6zM1830.7 261.1h2.6v2.6h-2.6zM1856.3 365.9h2.6v2.6h-2.6zM1398.1 324.1h2.6v2.6h-2.6zM1263.1 444.7h2.6v2.6h-2.6zM1137.9 884.3h2.6v2.6h-2.6zM1883.0 1114.3h2.6v2.6h-2.6zM1578.0 1421.6h2.6v2.6h-2.6zM1324.3 428.1h2.6v2.6h-2.6zM1941.9 726.8h2.6v2.6h-2.6zM2503.2 773.0h2.6v2.6h-2.6zM431.2 708.1h2.6v2.6h-2.6zM2559.2 896.1h2.6v2.6h-2.6zM2251.4 741.9h2.6v2.6h-2.6zM1768.9 332.4h2.6v2.6h-2.6zM855.6 371.9h2.6v2.6h-2.6zM1305.6 679.5h2.6v2.6h-2.6zM1655.1 1135.6h2.6v2.6h-2.6zM939.8 602.0h2.6v2.6h-2.6zM455.3 396.6h2.6v2.6h-2.6zM1258.3 1486.7h2.6v2.6h-2.6zM823.6 797.7h2.6v2.6h-2.6zM428.9 1051.5h2.6v2.6h-2.6zM1346.8 690.3h2.6v2.6h-2.6zM1277.1 608.4h2.6v2.6h-2.6zM1318.2 485.1h2.6v2.6h-2.6zM2003.2 1534.3h2.6v2.6h-2.6zM2440.3 739.7h2.6v2.6h-2.6zM426.2 1304.0h2.6v2.6h-2.6zM1438.5 990.4h2.6v2.6h-2.6zM1875.5 1363.9h2.6v2.6h-2.6zM1565.4 835.1h2.6v2.6h-2.6zM695.8 284.7h2.6v2.6h-2.6zM772.2 442.8h2.6v2.6h-2.6zM2516.8 1020.7h2.6v2.6h-2.6zM461.7 672.1h2.6v2.6h-2.6zM1327.0 1395.9h2.6v2.6h-2.6zM1329.9 992.6h2.6v2.6h-2.6zM994.1 679.0h2.6v2.6h-2.6zM579.4 1323.7h2.6v2.6h-2.6zM1500.2 1251.4h2.6v2.6h-2.6zM1687.4 350.8h2.6v2.6h-2.6zM1004.9 674.9h2.6v2.6h-2.6zM2162.1 711.8h2.6v2.6h-2.6zM2572.7 1343.0h2.6v2.6h-2.6zM1954.2 971.3h2.6v2.6h-2.6zM1957.9 700.9h2.6v2.6h-2.6zM630.0 1429.3h2.6v2.6h-2.6zM1434.0 1569.5h2.6v2.6h-2.6zM2047.0 1031.3h2.6v2.6h-2.6zM1360.9 1188.0h2.6v2.6h-2.6zM945.3 721.2h2.6v2.6h-2.6zM1119.2 1373.6h2.6v2.6h-2.6zM2537.1 362.2h2.6v2.6h-2.6zM455.1 720.5h2.6v2.6h-2.6zM1935.9 839.7h2.6v2.6h-2.6zM2110.1 1583.4h2.6v2.6h-2.6zM1899.1 1159.8h2.6v2.6h-2.6zM722.1 1046.2h2.6v2.6h-2.6zM1812.1 499.7h2.6v2.6h-2.6zM458.3 1176.9h2.6v2.6h-2.6zM2634.9 1132.6h2.6v2.6h-2.6zM851.7 1446.3h2.6v2.6h-2.6zM1114.6 704.5h2.6v2.6h-2.6zM2230.3 1339.4h2.6v2.6h-2.6zM2495.1 1466.4h2.6v2.6h-2.6zM405.3 546.7h2.6v2.6h-2.6zM1711.4 551.0h2.6v2.6h-2.6zM2314.9 1258.3h2.6v2.6h-2.6zM2101.1 1549.4h2.6v2.6h-2.6zM1992.3 1576.7h2.6v2.6h-2.6zM1449.6 416.5h2.6v2.6h-2.6zM1562.4 1556.1h2.6v2.6h-2.6zM1782.0 677.7h2.6v2.6h-2.6zM621.6 414.1h2.6v2.6h-2.6zM675.9 1222.4h2.6v2.6h-2.6zM1139.0 835.3h2.6v2.6h-2.6zM2594.9 691.6h2.6v2.6h-2.6zM1870.4 715.4h2.6v2.6h-2.6zM1267.6 823.9h2.6v2.6h-2.6zM1400.3 389.9h2.6v2.6h-2.6zM1844.0 1005.8h2.6v2.6h-2.6zM651.2 1592.2h2.6v2.6h-2.6zM2620.8 611.4h2.6v2.6h-2.6zM1166.4 1320.5h2.6v2.6h-2.6zM1538.9 1020.3h2.6v2.6h-2.6zM2119.9 1279.8h2.6v2.6h-2.6zM997.1 909.0h2.6v2.6h-2.6zM2223.5 1463.7h2.6v2.6h-2.6zM2348.8 1347.2h2.6v2.6h-2.6zM1881.0 262.6h2.6v2.6h-2.6zM1222.9 1220.1h2.6v2.6h-2.6zM946.6 314.3h2.6v2.6h-2.6zM1736.4 1303.2h2.6v2.6h-2.6zM2641.3 1247.0h2.6v2.6h-2.6zM1409.6 270.9h2.6v2.6h-2.6zM1929.8 1477.2h2.6v2.6h-2.6zM1565.5 1014.9h2.6v2.6h-2.6zM607.5 675.8h2.6v2.6h-2.6zM1732.2 1351.7h2.6v2.6h-2.6zM1130.2 1392.1h2.6v2.6h-2.6zM1723.4 1004.0h2.6v2.6h-2.6zM852.1 1200.5h2.6v2.6h-2.6zM708.2 815.5h2.6v2.6h-2.6zM2394.7 1442.8h2.6v2.6h-2.6zM2525.1 497.5h2.6v2.6h-2.6zM2435.1 883.2h2.6v2.6h-2.6zM770.0 1482.7h2.6v2.6h-2.6zM2538.0 1590.4h2.6v2.6h-2.6zM1206.5 541.3h2.6v2.6h-2.6zM2480.5 1225.3h2.6v2.6h-2.6zM2482.4 1248.6h2.6v2.6h-2.6zM2615.4 1249.5h2.6v2.6h-2.6zM2244.7 1519.8h2.6v2.6h-2.6zM1366.9 1515.6h2.6v2.6h-2.6zM1330.8 1573.3h2.6v2.6h-2.6zM1619.9 1124.5h2.6v2.6h-2.6zM422.0 701.9h2.6v2.6h-2.6zM1018.7 242.8h2.6v2.6h-2.6zM1104.3 586.6h2.6v2.6h-2.6zM644.7 584.4h2.6v2.6h-2.6zM2335.8 528.2h2.6v2.6h-2.6zM1974.7 1616.7h2.6v2.6h-2.6zM420.4 1222.9h2.6v2.6h-2.6zM702.4 485.1h2.6v2.6h-2.6zM1092.9 1512.9h2.6v2.6h-2.6zM2371.6 354.6h2.6v2.6h-2.6zM2177.8 344.6h2.6v2.6h-2.6zM1207.1 1627.7h2.6v2.6h-2.6zM2379.2 379.9h2.6v2.6h-2.6zM1675.9 815.6h2.6v2.6h-2.6zM1919.0 1429.8h2.6v2.6h-2.6zM1654.7 1532.9h2.6v2.6h-2.6zM2416.9 455.2h2.6v2.6h-2.6zM528.2 503.6h2.6v2.6h-2.6zM1542.8 1200.4h2.6v2.6h-2.6zM2322.2 1251.0h2.6v2.6h-2.6zM1872.3 1068.6h2.6v2.6h-2.6zM1871.7 787.0h2.6v2.6h-2.6zM1891.3 1398.4h2.6v2.6h-2.6zM2327.0 1233.5h2.6v2.6h-2.6zM1920.1 327.4h2.6v2.6h-2.6zM1137.9 864.8h2.6v2.6h-2.6zM1090.9 504.0h2.6v2.6h-2.6zM1243.0 1394.5h2.6v2.6h-2.6zM1001.2 1537.6h2.6v2.6h-2.6zM414.2 817.6h2.6v2.6h-2.6zM2022.9 1284.3h2.6v2.6h-2.6zM426.8 387.4h2.6v2.6h-2.6zM559.3 1018.3h2.6v2.6h-2.6zM613.1 781.7h2.6v2.6h-2.6zM1035.0 369.7h2.6v2.6h-2.6zM1243.1 836.6h2.6v2.6h-2.6zM1701.3 710.1h2.6v2.6h-2.6zM555.0 687.2h2.6v2.6h-2.6zM1961.7 231.0h2.6v2.6h-2.6zM1574.1 253.4h2.6v2.6h-2.6zM2344.5 501.7h2.6v2.6h-2.6zM1600.6 354.1h2.6v2.6h-2.6zM1631.4 1337.6h2.6v2.6h-2.6zM2457.8 1333.2h2.6v2.6h-2.6zM2410.8 236.9h2.6v2.6h-2.6zM2213.0 294.7h2.6v2.6h-2.6zM2358.8 1622.8h2.6v2.6h-2.6zM2014.7 1076.1h2.6v2.6h-2.6zM2049.7 347.6h2.6v2.6h-2.6zM2342.7 348.6h2.6v2.6h-2.6zM937.2 604.6h2.6v2.6h-2.6zM1947.1 777.8h2.6v2.6h-2.6zM1268.3 929.8h2.6v2.6h-2.6zM2094.9 1403.4h2.6v2.6h-2.6zM2301.5 623.1h2.6v2.6h-2.6zM517.9 358.2h2.6v2.6h-2.6zM658.6 1271.4h2.6v2.6h-2.6zM589.6 1286.6h2.6v2.6h-2.6zM404.0 1189.0h2.6v2.6h-2.6zM956.5 1130.2h2.6v2.6h-2.6zM2110.6 1143.7h2.6v2.6h-2.6zM566.5 255.1h2.6v2.6h-2.6zM1261.0 1497.6h2.6v2.6h-2.6zM1445.1 594.4h2.6v2.6h-2.6zM1459.0 1376.3h2.6v2.6h-2.6zM865.9 399.0h2.6v2.6h-2.6zM2466.5 820.6h2.6v2.6h-2.6zM1398.5 661.9h2.6v2.6h-2.6zM950.0 1434.5h2.6v2.6h-2.6zM2205.6 582.2h2.6v2.6h-2.6zM2031.2 1514.5h2.6v2.6h-2.6zM1339.9 1601.3h2.6v2.6h-2.6zM604.3 1400.5h2.6v2.6h-2.6zM2314.3 579.7h2.6v2.6h-2.6zM1022.9 607.3h2.6v2.6h-2.6zM707.3 1363.2h2.6v2.6h-2.6zM1971.3 1330.8h2.6v2.6h-2.6zM1844.8 592.5h2.6v2.6h-2.6zM596.1 588.4h2.6v2.6h-2.6zM2173.7 253.5h2.6v2.6h-2.6zM1600.2 676.6h2.6v2.6h-2.6zM1049.1 695.3h2.6v2.6h-2.6zM1731.2 462.8h2.6v2.6h-2.6zM757.9 1417.1h2.6v2.6h-2.6zM2097.6 730.4h2.6v2.6h-2.6zM959.8 1045.6h2.6v2.6h-2.6zM2498.1 1330.9h2.6v2.6h-2.6zM1397.0 1115.7h2.6v2.6h-2.6zM1208.3 1220.4h2.6v2.6h-2.6zM1565.3 264.1h2.6v2.6h-2.6zM1916.4 1448.0h2.6v2.6h-2.6zM1490.6 450.4h2.6v2.6h-2.6zM1082.6 495.7h2.6v2.6h-2.6zM2289.9 1257.1h2.6v2.6h-2.6zM1069.0 650.2h2.6v2.6h-2.6zM684.2 843.3h2.6v2.6h-2.6zM2596.2 1287.2h2.6v2.6h-2.6zM2505.0 330.3h2.6v2.6h-2.6zM2482.4 1505.8h2.6v2.6h-2.6zM2224.4 405.6h2.6v2.6h-2.6zM2354.9 1597.3h2.6v2.6h-2.6zM2065.8 947.4h2.6v2.6h-2.6zM1171.6 1457.6h2.6v2.6h-2.6zM1746.7 678.9h2.6v2.6h-2.6zM585.1 250.4h2.6v2.6h-2.6zM1979.5 640.5h2.6v2.6h-2.6zM697.5 656.4h2.6v2.6h-2.6zM1439.6 1413.6h2.6v2.6h-2.6zM1466.9 406.5h2.6v2.6h-2.6zM2264.1 1171.6h2.6v2.6h-2.6zM1628.4 1485.5h2.6v2.6h-2.6zM1311.8 768.8h2.6v2.6h-2.6zM523.2 1201.4h2.6v2.6h-2.6zM1798.9 1554.4h2.6v2.6h-2.6zM417.6 804.8h2.6v2.6h-2.6zM1384.1 808.3h2.6v2.6h-2.6zM497.5 1368.1h2.6v2.6h-2.6zM496.7 1123.5h2.6v2.6h-2.6zM1103.2 821.3h2.6v2.6h-2.6zM2285.4 512.3h2.6v2.6h-2.6zM1550.9 599.9h2.6v2.6h-2.6zM1772.7 989.0h2.6v2.6h-2.6zM1901.5 359.8h2.6v2.6h-2.6zM1823.5 1154.4h2.6v2.6h-2.6zM552.4 1584.8h2.6v2.6h-2.6zM2314.2 1338.0h2.6v2.6h-2.6zM2169.5 927.2h2.6v2.6h-2.6zM2459.5 443.3h2.6v2.6h-2.6zM2073.4 1595.3h2.6v2.6h-2.6zM541.2 1135.6h2.6v2.6h-2.6zM2589.7 424.8h2.6v2.6h-2.6zM1658.1 1484.8h2.6v2.6h-2.6zM993.4 520.4h2.6v2.6h-2.6zM2014.9 1339.6h2.6v2.6h-2.6zM2518.9 1140.9h2.6v2.6h-2.6zM521.2 1377.3h2.6v2.6h-2.6zM1043.4 1016.1h2.6v2.6h-2.6zM2022.0 1597.4h2.6v2.6h-2.6zM1640.6 429.0h2.6v2.6h-2.6zM1551.4 1004.0h2.6v2.6h-2.6zM2092.2 493.9h2.6v2.6h-2.6zM1641.2 295.6h2.6v2.6h-2.6zM2616.3 257.7h2.6v2.6h-2.6zM1617.3 470.7h2.6v2.6h-2.6zM1018.2 789.9h2.6v2.6h-2.6zM969.4 592.1h2.6v2.6h-2.6zM1094.5 925.9h2.6v2.6h-2.6zM2552.0 519.3h2.6v2.6h-2.6zM788.4 286.1h2.6v2.6h-2.6zM2460.2 1323.8h2.6v2.6h-2.6zM2268.7 435.7h2.6v2.6h-2.6zM1393.2 1167.4h2.6v2.6h-2.6zM1595.5 1252.7h2.6v2.6h-2.6zM837.0 1491.4h2.6v2.6h-2.6zM1731.9 1083.9h2.6v2.6h-2.6zM1718.6 846.9h2.6v2.6h-2.6zM428.3 455.6h2.6v2.6h-2.6zM1482.7 340.8h2.6v2.6h-2.6zM1738.8 492.4h2.6v2.6h-2.6zM1940.4 793.8h2.6v2.6h-2.6zM1879.6 593.3h2.6v2.6h-2.6zM680.3 1157.4h2.6v2.6h-2.6zM2257.4 521.8h2.6v2.6h-2.6zM482.5 1443.8h2.6v2.6h-2.6zM2094.8 1301.2h2.6v2.6h-2.6zM2179.1 811.0h2.6v2.6h-2.6zM2539.9 1358.2h2.6v2.6h-2.6zM2100.5 1544.8h2.6v2.6h-2.6zM2443.2 1018.1h2.6v2.6h-2.6zM527.0 1053.2h2.6v2.6h-2.6zM1515.4 249.7h2.6v2.6h-2.6zM1107.1 1376.0h2.6v2.6h-2.6zM1805.8 1530.2h2.6v2.6h-2.6zM2100.8 486.4h2.6v2.6h-2.6zM2004.9 291.8h2.6v2.6h-2.6zM2356.1 638.6h2.6v2.6h-2.6zM2584.8 292.9h2.6v2.6h-2.6zM2070.5 368.1h2.6v2.6h-2.6zM2341.9 1372.0h2.6v2.6h-2.6zM1552.6 1015.6h2.6v2.6h-2.6zM894.8 737.0h2.6v2.6h-2.6zM733.8 777.7h2.6v2.6h-2.6zM710.4 1115.1h2.6v2.6h-2.6zM1509.1 724.2h2.6v2.6h-2.6zM1179.1 1560.6h2.6v2.6h-2.6zM2532.6 1598.9h2.6v2.6h-2.6zM1215.8 341.0h2.6v2.6h-2.6zM766.2 1432.3h2.6v2.6h-2.6zM1189.6 432.2h2.6v2.6h-2.6zM2550.2 538.8h2.6v2.6h-2.6zM1660.7 805.8h2.6v2.6h-2.6zM710.8 747.9h2.6v2.6h-2.6zM2173.9 987.3h2.6v2.6h-2.6zM2330.0 248.5h2.6v2.6h-2.6zM642.6 831.8h2.6v2.6h-2.6zM1844.8 802.9h2.6v2.6h-2.6zM1021.0 1367.7h2.6v2.6h-2.6zM2318.9 1136.2h2.6v2.6h-2.6zM698.0 1264.8h2.6v2.6h-2.6zM1767.1 1256.2h2.6v2.6h-2.6zM2055.1 1015.7h2.6v2.6h-2.6zM1265.0 1400.1h2.6v2.6h-2.6zM2482.3 1559.8h2.6v2.6h-2.6zM1082.9 522.5h2.6v2.6h-2.6zM833.3 1180.6h2.6v2.6h-2.6zM2569.7 561.0h2.6v2.6h-2.6zM1410.9 990.3h2.6v2.6h-2.6zM1337.1 995.2h2.6v2.6h-2.6zM1234.5 1048.7h2.6v2.6h-2.6zM2600.7 1297.3h2.6v2.6h-2.6zM2566.5 816.5h2.6v2.6h-2.6zM736.3 509.4h2.6v2.6h-2.6zM920.8 1305.4h2.6v2.6h-2.6zM902.1 1012.9h2.6v2.6h-2.6zM2486.3 816.6h2.6v2.6h-2.6zM933.5 1470.2h2.6v2.6h-2.6zM2602.8 321.4h2.6v2.6h-2.6zM2250.9 1591.9h2.6v2.6h-2.6zM1066.9 728.2h2.6v2.6h-2.6zM831.6 530.0h2.6v2.6h-2.6zM2131.4 845.2h2.6v2.6h-2.6zM1095.9 737.1h2.6v2.6h-2.6zM2441.7 1623.5h2.6v2.6h-2.6zM1119.1 600.7h2.6v2.6h-2.6zM1006.0 1325.2h2.6v2.6h-2.6zM2444.8 496.3h2.6v2.6h-2.6zM635.7 692.5h2.6v2.6h-2.6zM2268.0 1414.0h2.6v2.6h-2.6zM2537.7 815.0h2.6v2.6h-2.6zM497.4 290.3h2.6v2.6h-2.6zM2214.6 751.4h2.6v2.6h-2.6zM783.3 621.1h2.6v2.6h-2.6zM625.2 1510.7h2.6v2.6h-2.6zM1367.9 933.8h2.6v2.6h-2.6zM849.9 958.8h2.6v2.6h-2.6zM970.8 1542.6h2.6v2.6h-2.6zM2346.8 1233.4h2.6v2.6h-2.6zM1669.5 1250.2h2.6v2.6h-2.6zM590.6 733.3h2.6v2.6h-2.6zM2382.6 1335.2h2.6v2.6h-2.6zM1110.2 764.7h2.6v2.6h-2.6zM713.6 227.1h2.6v2.6h-2.6zM2537.7 484.7h2.6v2.6h-2.6zM2202.3 476.2h2.6v2.6h-2.6zM1424.0 989.0h2.6v2.6h-2.6zM815.9 620.1h2.6v2.6h-2.6zM713.3 231.3h2.6v2.6h-2.6zM1228.4 1402.8h2.6v2.6h-2.6zM895.2 832.7h2.6v2.6h-2.6zM1285.5 948.0h2.6v2.6h-2.6zM882.0 292.4h2.6v2.6h-2.6zM1143.1 1599.0h2.6v2.6h-2.6zM1705.5 859.7h2.6v2.6h-2.6zM1062.5 1230.9h2.6v2.6h-2.6zM733.5 1086.3h2.6v2.6h-2.6zM1524.0 322.1h2.6v2.6h-2.6zM1527.2 700.7h2.6v2.6h-2.6zM423.5 856.3h2.6v2.6h-2.6zM858.8 375.9h2.6v2.6h-2.6zM1944.7 1002.0h2.6v2.6h-2.6zM1279.3 1213.7h2.6v2.6h-2.6zM2372.6 738.5h2.6v2.6h-2.6zM1584.3 1475.2h2.6v2.6h-2.6zM999.4 859.1h2.6v2.6h-2.6zM1494.3 731.4h2.6v2.6h-2.6zM1661.1 1330.1h2.6v2.6h-2.6zM2361.5 804.6h2.6v2.6h-2.6zM1037.5 1302.4h2.6v2.6h-2.6zM1982.7 610.3h2.6v2.6h-2.6zM1397.6 572.6h2.6v2.6h-2.6zM1578.2 518.4h2.6v2.6h-2.6zM559.4 597.0h2.6v2.6h-2.6zM596.0 646.1h2.6v2.6h-2.6zM1138.8 661.5h2.6v2.6h-2.6zM2491.6 1296.9h2.6v2.6h-2.6zM988.1 1494.8h2.6v2.6h-2.6zM1485.0 247.2h2.6v2.6h-2.6zM1456.1 343.8h2.6v2.6h-2.6zM1018.1 1573.2h2.6v2.6h-2.6zM1596.2 1607.0h2.6v2.6h-2.6zM1394.6 693.4h2.6v2.6h-2.6zM916.2 573.0h2.6v2.6h-2.6zM2135.8 1054.4h2.6v2.6h-2.6zM2337.1 898.4h2.6v2.6h-2.6zM2358.3 1488.6h2.6v2.6h-2.6zM566.6 1162.9h2.6v2.6h-2.6zM568.2 721.1h2.6v2.6h-2.6zM686.6 1112.9h2.6v2.6h-2.6zM679.3 349.3h2.6v2.6h-2.6zM2055.8 1177.0h2.6v2.6h-2.6zM2303.4 1500.2h2.6v2.6h-2.6zM2004.0 1387.9h2.6v2.6h-2.6zM1048.8 867.6h2.6v2.6h-2.6zM1626.9 783.6h2.6v2.6h-2.6zM1440.1 901.2h2.6v2.6h-2.6zM1564.3 280.2h2.6v2.6h-2.6zM733.9 1308.1h2.6v2.6h-2.6zM2347.0 516.5h2.6v2.6h-2.6zM652.4 553.9h2.6v2.6h-2.6zM2377.4 847.5h2.6v2.6h-2.6zM2603.4 922.0h2.6v2.6h-2.6zM661.2 1298.7h2.6v2.6h-2.6zM669.4 1202.2h2.6v2.6h-2.6zM2641.4 1269.8h2.6v2.6h-2.6zM2231.0 822.7h2.6v2.6h-2.6zM540.2 542.5h2.6v2.6h-2.6zM2332.5 1331.9h2.6v2.6h-2.6zM1692.2 509.0h2.6v2.6h-2.6zM1475.0 1374.0h2.6v2.6h-2.6zM645.3 1492.1h2.6v2.6h-2.6zM576.1 1237.5h2.6v2.6h-2.6zM441.1 1424.6h2.6v2.6h-2.6zM1108.6 999.1h2.6v2.6h-2.6zM498.6 1161.0h2.6v2.6h-2.6zM2643.9 649.7h2.6v2.6h-2.6zM2285.6 438.1h2.6v2.6h-2.6zM482.5 1161.4h2.6v2.6h-2.6zM1009.3 1228.2h2.6v2.6h-2.6zM546.6 412.9h2.6v2.6h-2.6zM1111.1 953.3h2.6v2.6h-2.6zM940.2 403.2h2.6v2.6h-2.6zM651.3 739.9h2.6v2.6h-2.6zM540.1 985.4h2.6v2.6h-2.6zM466.0 955.4h2.6v2.6h-2.6zM1113.0 281.4h2.6v2.6h-2.6zM449.8 1042.0h2.6v2.6h-2.6zM2001.7 478.6h2.6v2.6h-2.6zM1684.8 345.2h2.6v2.6h-2.6zM1447.9 1370.8h2.6v2.6h-2.6zM825.4 877.5h2.6v2.6h-2.6zM2432.0 601.6h2.6v2.6h-2.6zM2160.8 334.9h2.6v2.6h-2.6zM1016.6 1314.8h2.6v2.6h-2.6zM2352.5 633.9h2.6v2.6h-2.6zM1325.1 690.8h2.6v2.6h-2.6zM832.8 688.1h2.6v2.6h-2.6zM2288.1 1030.9h2.6v2.6h-2.6zM2298.3 1026.1h2.6v2.6h-2.6zM1923.8 1003.9h2.6v2.6h-2.6zM877.5 913.8h2.6v2.6h-2.6zM1175.0 547.0h2.6v2.6h-2.6zM1110.9 1515.5h2.6v2.6h-2.6zM2566.3 1583.1h2.6v2.6h-2.6zM1625.5 612.2h2.6v2.6h-2.6zM1221.5 641.9h2.6v2.6h-2.6zM2564.9 1436.9h2.6v2.6h-2.6zM2171.7 955.2h2.6v2.6h-2.6zM1491.6 1257.5h2.6v2.6h-2.6zM2402.1 1230.7h2.6v2.6h-2.6zM2531.5 1071.5h2.6v2.6h-2.6zM2288.1 1076.5h2.6v2.6h-2.6zM1636.4 1377.5h2.6v2.6h-2.6zM1404.8 1409.0h2.6v2.6h-2.6zM979.8 1592.9h2.6v2.6h-2.6zM2046.2 499.8h2.6v2.6h-2.6zM1939.6 631.0h2.6v2.6h-2.6zM618.2 411.0h2.6v2.6h-2.6zM1375.2 1555.5h2.6v2.6h-2.6zM934.4 987.3h2.6v2.6h-2.6zM1389.4 464.9h2.6v2.6h-2.6zM1964.3 652.4h2.6v2.6h-2.6zM502.0 1417.2h2.6v2.6h-2.6zM2114.6 291.5h2.6v2.6h-2.6zM1417.8 673.2h2.6v2.6h-2.6zM1876.7 665.7h2.6v2.6h-2.6zM1973.5 290.2h2.6v2.6h-2.6zM2442.7 1132.8h2.6v2.6h-2.6zM1296.2 1373.1h2.6v2.6h-2.6zM2066.0 665.3h2.6v2.6h-2.6zM602.2 1121.3h2.6v2.6h-2.6zM1355.1 1442.1h2.6v2.6h-2.6zM737.4 1390.8h2.6v2.6h-2.6zM2298.6 513.4h2.6v2.6h-2.6zM975.1 1086.8h2.6v2.6h-2.6zM1040.2 908.3h2.6v2.6h-2.6zM1598.5 776.6h2.6v2.6h-2.6zM678.4 624.3h2.6v2.6h-2.6zM2225.0 1346.5h2.6v2.6h-2.6zM628.2 1197.9h2.6v2.6h-2.6zM2378.7 1082.1h2.6v2.6h-2.6zM2561.8 1052.0h2.6v2.6h-2.6zM1453.9 788.7h2.6v2.6h-2.6zM1713.6 1152.7h2.6v2.6h-2.6zM2633.0 435.7h2.6v2.6h-2.6zM1131.9 1479.0h2.6v2.6h-2.6zM1944.0 657.9h2.6v2.6h-2.6zM1666.1 314.0h2.6v2.6h-2.6zM738.1 280.1h2.6v2.6h-2.6zM2302.8 416.8h2.6v2.6h-2.6zM1238.0 687.7h2.6v2.6h-2.6zM1967.4 328.6h2.6v2.6h-2.6zM420.2 467.1h2.6v2.6h-2.6zM1678.3 722.0h2.6v2.6h-2.6zM571.3 627.0h2.6v2.6h-2.6zM995.9 1245.4h2.6v2.6h-2.6zM2005.4 254.0h2.6v2.6h-2.6zM2278.9 375.6h2.6v2.6h-2.6zM1299.4 820.1h2.6v2.6h-2.6zM467.1 377.2h2.6v2.6h-2.6zM2069.1 1190.8h2.6v2.6h-2.6zM2174.9 1584.4h2.6v2.6h-2.6zM2399.0 647.6h2.6v2.6h-2.6zM1878.3 1150.5h2.6v2.6h-2.6zM911.4 1291.2h2.6v2.6h-2.6zM2446.6 1054.7h2.6v2.6h-2.6zM2158.4 619.9h2.6v2.6h-2.6zM2300.3 689.8h2.6v2.6h-2.6zM1084.1 1016.9h2.6v2.6h-2.6zM1775.8 879.2h2.6v2.6h-2.6zM2271.5 1283.9h2.6v2.6h-2.6zM1582.3 1464.8h2.6v2.6h-2.6zM1301.9 771.9h2.6v2.6h-2.6zM2605.8 666.5h2.6v2.6h-2.6zM699.9 1424.5h2.6v2.6h-2.6zM1950.9 676.0h2.6v2.6h-2.6zM2216.1 1176.9h2.6v2.6h-2.6zM1418.3 968.9h2.6v2.6h-2.6zM2537.4 983.6h2.6v2.6h-2.6zM633.8 841.8h2.6v2.6h-2.6zM1083.5 1570.4h2.6v2.6h-2.6zM1383.9 786.9h2.6v2.6h-2.6zM2122.5 1299.4h2.6v2.6h-2.6zM579.3 1179.3h2.6v2.6h-2.6zM2501.1 1040.1h2.6v2.6h-2.6zM1023.5 1533.3h2.6v2.6h-2.6zM545.7 912.7h2.6v2.6h-2.6zM845.2 1003.7h2.6v2.6h-2.6zM1302.7 1461.5h2.6v2.6h-2.6zM563.8 877.9h2.6v2.6h-2.6zM1048.8 379.0h2.6v2.6h-2.6zM2300.5 1136.4h2.6v2.6h-2.6zM1191.4 972.0h2.6v2.6h-2.6zM1406.8 309.9h2.6v2.6h-2.6zM1141.9 273.5h2.6v2.6h-2.6zM623.1 1416.7h2.6v2.6h-2.6zM2158.2 641.6h2.6v2.6h-2.6zM439.7 1461.8h2.6v2.6h-2.6zM552.6 568.1h2.6v2.6h-2.6zM2309.4 1031.0h2.6v2.6h-2.6zM1387.1 1320.9h2.6v2.6h-2.6zM2465.9 1035.4h2.6v2.6h-2.6zM2473.5 322.6h2.6v2.6h-2.6zM1568.8 1188.4h2.6v2.6h-2.6zM2303.9 893.0h2.6v2.6h-2.6zM1815.1 630.9h2.6v2.6h-2.6zM2042.2 1037.1h2.6v2.6h-2.6zM2627.4 966.5h2.6v2.6h-2.6zM833.1 1337.9h2.6v2.6h-2.6zM1414.8 409.5h2.6v2.6h-2.6zM2565.3 920.4h2.6v2.6h-2.6zM777.8 508.4h2.6v2.6h-2.6zM972.1 1525.6h2.6v2.6h-2.6zM2228.4 274.9h2.6v2.6h-2.6zM1976.6 686.4h2.6v2.6h-2.6zM1384.5 1267.6h2.6v2.6h-2.6zM1059.3 635.4h2.6v2.6h-2.6zM2494.4 1330.8h2.6v2.6h-2.6zM2270.2 1267.8h2.6v2.6h-2.6zM2559.4 1284.1h2.6v2.6h-2.6zM2078.1 634.2h2.6v2.6h-2.6zM1985.5 1539.7h2.6v2.6h-2.6zM1684.4 1232.7h2.6v2.6h-2.6zM794.2 878.3h2.6v2.6h-2.6zM1591.2 1249.5h2.6v2.6h-2.6zM1567.9 557.7h2.6v2.6h-2.6zM2618.2 903.9h2.6v2.6h-2.6zM666.3 1405.2h2.6v2.6h-2.6zM1222.9 1559.4h2.6v2.6h-2.6zM468.6 1294.0h2.6v2.6h-2.6zM1929.1 1228.9h2.6v2.6h-2.6zM482.6 933.0h2.6v2.6h-2.6zM1534.7 645.6h2.6v2.6h-2.6zM599.4 1085.9h2.6v2.6h-2.6zM1223.4 1607.6h2.6v2.6h-2.6zM926.7 773.8h2.6v2.6h-2.6zM1881.5 414.2h2.6v2.6h-2.6zM737.8 350.2h2.6v2.6h-2.6zM2307.6 1327.8h2.6v2.6h-2.6zM666.6 619.8h2.6v2.6h-2.6zM1891.3 307.3h2.6v2.6h-2.6zM536.4 490.8h2.6v2.6h-2.6zM2147.4 574.2h2.6v2.6h-2.6zM2081.1 455.1h2.6v2.6h-2.6zM1826.8 1171.5h2.6v2.6h-2.6zM1838.2 470.3h2.6v2.6h-2.6zM1447.3 580.2h2.6v2.6h-2.6zM1127.1 691.7h2.6v2.6h-2.6zM2445.9 486.9h2.6v2.6h-2.6zM1290.1 1322.2h2.6v2.6h-2.6zM579.1 1316.4h2.6v2.6h-2.6zM2436.2 1094.9h2.6v2.6h-2.6zM2481.7 863.7h2.6v2.6h-2.6zM2151.8 1622.6h2.6v2.6h-2.6zM1514.1 861.4h2.6v2.6h-2.6zM2543.4 1201.5h2.6v2.6h-2.6zM1535.0 781.1h2.6v2.6h-2.6zM2013.6 1589.2h2.6v2.6h-2.6zM1533.3 876.4h2.6v2.6h-2.6zM1541.7 283.4h2.6v2.6h-2.6zM2253.6 1241.1h2.6v2.6h-2.6zM1811.8 1203.8h2.6v2.6h-2.6zM2219.3 833.7h2.6v2.6h-2.6zM1686.8 563.6h2.6v2.6h-2.6zM1653.2 1138.3h2.6v2.6h-2.6zM1666.2 500.1h2.6v2.6h-2.6zM1026.0 281.7h2.6v2.6h-2.6zM1346.1 1036.6h2.6v2.6h-2.6zM1195.6 1164.4h2.6v2.6h-2.6zM1264.1 885.1h2.6v2.6h-2.6zM853.9 972.4h2.6v2.6h-2.6zM887.5 535.6h2.6v2.6h-2.6zM1365.1 1119.1h2.6v2.6h-2.6zM1558.0 545.4h2.6v2.6h-2.6zM1683.6 1210.9h2.6v2.6h-2.6zM878.4 395.4h2.6v2.6h-2.6zM2352.4 705.8h2.6v2.6h-2.6zM1662.8 910.8h2.6v2.6h-2.6zM1551.3 666.6h2.6v2.6h-2.6zM740.3 1205.1h2.6v2.6h-2.6zM1927.7 1538.7h2.6v2.6h-2.6zM1519.7 1418.2h2.6v2.6h-2.6zM1532.0 1610.9h2.6v2.6h-2.6zM775.8 646.8h2.6v2.6h-2.6zM2132.2 817.5h2.6v2.6h-2.6zM1667.4 1468.7h2.6v2.6h-2.6zM880.6 318.1h2.6v2.6h-2.6zM439.3 1093.3h2.6v2.6h-2.6zM2527.6 561.8h2.6v2.6h-2.6zM1537.2 825.7h2.6v2.6h-2.6zM1510.2 1380.2h2.6v2.6h-2.6zM2393.0 1045.4h2.6v2.6h-2.6zM1463.7 1497.9h2.6v2.6h-2.6zM1398.0 651.2h2.6v2.6h-2.6zM1476.1 1153.2h2.6v2.6h-2.6zM927.9 1270.7h2.6v2.6h-2.6zM1240.8 310.2h2.6v2.6h-2.6zM1970.4 1466.8h2.6v2.6h-2.6zM2445.8 1602.7h2.6v2.6h-2.6zM507.2 1591.1h2.6v2.6h-2.6zM2426.5 1474.7h2.6v2.6h-2.6zM417.8 1166.8h2.6v2.6h-2.6zM844.4 1489.1h2.6v2.6h-2.6zM1019.9 306.1h2.6v2.6h-2.6zM1721.4 1196.8h2.6v2.6h-2.6zM1599.5 803.1h2.6v2.6h-2.6zM553.0 1240.1h2.6v2.6h-2.6zM418.7 1037.9h2.6v2.6h-2.6zM619.6 864.5h2.6v2.6h-2.6zM1709.7 571.3h2.6v2.6h-2.6zM2097.5 585.0h2.6v2.6h-2.6zM2348.6 776.7h2.6v2.6h-2.6zM1945.6 858.6h2.6v2.6h-2.6zM1119.7 356.2h2.6v2.6h-2.6zM1776.3 298.3h2.6v2.6h-2.6zM1454.2 795.6h2.6v2.6h-2.6zM1057.3 578.6h2.6v2.6h-2.6zM1496.0 1461.4h2.6v2.6h-2.6zM2186.7 656.7h2.6v2.6h-2.6zM1738.2 1110.0h2.6v2.6h-2.6zM2025.2 1102.5h2.6v2.6h-2.6zM542.1 427.0h2.6v2.6h-2.6zM2174.3 593.8h2.6v2.6h-2.6zM1678.9 300.7h2.6v2.6h-2.6zM1707.6 629.7h2.6v2.6h-2.6zM494.3 246.9h2.6v2.6h-2.6zM936.9 949.4h2.6v2.6h-2.6zM2092.6 269.0h2.6v2.6h-2.6zM1541.6 695.9h2.6v2.6h-2.6zM1766.2 1209.5h2.6v2.6h-2.6zM589.4 572.9h2.6v2.6h-2.6zM2355.1 1156.5h2.6v2.6h-2.6zM775.5 980.4h2.6v2.6h-2.6zM1218.2 442.5h2.6v2.6h-2.6zM1314.2 969.7h2.6v2.6h-2.6zM1878.4 1464.0h2.6v2.6h-2.6zM1016.2 1611.6h2.6v2.6h-2.6zM1227.4 1133.9h2.6v2.6h-2.6zM1289.6 855.4h2.6v2.6h-2.6zM1946.1 1266.0h2.6v2.6h-2.6zM553.6 257.7h2.6v2.6h-2.6zM1181.3 671.0h2.6v2.6h-2.6zM1403.3 1551.0h2.6v2.6h-2.6zM1077.1 544.7h2.6v2.6h-2.6zM1369.9 692.7h2.6v2.6h-2.6zM1326.4 963.0h2.6v2.6h-2.6zM654.8 1286.5h2.6v2.6h-2.6zM1824.6 1282.4h2.6v2.6h-2.6zM1391.2 472.2h2.6v2.6h-2.6zM2070.5 1449.1h2.6v2.6h-2.6zM2406.9 1238.4h2.6v2.6h-2.6zM682.3 636.9h2.6v2.6h-2.6zM1953.3 282.2h2.6v2.6h-2.6zM1036.9 768.3h2.6v2.6h-2.6zM2191.9 264.0h2.6v2.6h-2.6zM1016.1 1119.1h2.6v2.6h-2.6zM410.6 658.8h2.6v2.6h-2.6zM2055.9 878.1h2.6v2.6h-2.6zM2070.5 570.2h2.6v2.6h-2.6zM2005.2 445.8h2.6v2.6h-2.6zM1816.0 1333.2h2.6v2.6h-2.6zM540.8 619.8h2.6v2.6h-2.6zM1145.0 1465.3h2.6v2.6h-2.6zM555.2 802.6h2.6v2.6h-2.6zM2639.4 355.0h2.6v2.6h-2.6zM2549.3 328.2h2.6v2.6h-2.6zM1622.6 855.9h2.6v2.6h-2.6zM1937.6 626.6h2.6v2.6h-2.6zM1461.1 1441.3h2.6v2.6h-2.6zM765.9 1481.0h2.6v2.6h-2.6zM614.2 470.5h2.6v2.6h-2.6zM904.1 980.3h2.6v2.6h-2.6zM1098.0 885.4h2.6v2.6h-2.6zM534.1 648.8h2.6v2.6h-2.6zM411.5 397.0h2.6v2.6h-2.6zM1881.2 1007.3h2.6v2.6h-2.6zM1440.0 261.6h2.6v2.6h-2.6zM2106.6 363.4h2.6v2.6h-2.6zM1972.7 796.4h2.6v2.6h-2.6zM2362.8 362.5h2.6v2.6h-2.6zM1190.5 284.7h2.6v2.6h-2.6zM2509.1 1088.8h2.6v2.6h-2.6zM1162.1 452.0h2.6v2.6h-2.6zM2404.7 724.3h2.6v2.6h-2.6zM683.1 883.1h2.6v2.6h-2.6zM1217.7 1373.7h2.6v2.6h-2.6zM535.7 1300.6h2.6v2.6h-2.6zM2400.0 310.7h2.6v2.6h-2.6zM1929.2 1243.8h2.6v2.6h-2.6zM2105.2 1443.3h2.6v2.6h-2.6zM1451.5 1133.0h2.6v2.6h-2.6zM1720.8 844.6h2.6v2.6h-2.6zM700.9 987.0h2.6v2.6h-2.6zM1585.4 710.6h2.6v2.6h-2.6zM2041.0 1469.7h2.6v2.6h-2.6zM1545.5 756.8h2.6v2.6h-2.6zM1545.9 1260.0h2.6v2.6h-2.6zM1078.8 1382.9h2.6v2.6h-2.6zM1886.7 1211.2h2.6v2.6h-2.6zM1739.7 320.5h2.6v2.6h-2.6zM1855.2 1441.1h2.6v2.6h-2.6zM1903.8 1406.5h2.6v2.6h-2.6zM727.1 863.7h2.6v2.6h-2.6zM2014.8 1553.5h2.6v2.6h-2.6zM587.3 513.2h2.6v2.6h-2.6zM937.7 582.3h2.6v2.6h-2.6zM1858.0 801.4h2.6v2.6h-2.6zM2477.5 1172.5h2.6v2.6h-2.6zM1965.1 1496.5h2.6v2.6h-2.6zM2336.9 265.6h2.6v2.6h-2.6zM1353.1 1137.1h2.6v2.6h-2.6zM2028.3 1493.3h2.6v2.6h-2.6zM860.8 920.8h2.6v2.6h-2.6zM2424.2 486.8h2.6v2.6h-2.6zM496.2 821.0h2.6v2.6h-2.6zM792.8 273.4h2.6v2.6h-2.6zM1286.6 1116.8h2.6v2.6h-2.6zM1849.9 1426.7h2.6v2.6h-2.6zM1033.7 613.6h2.6v2.6h-2.6zM2432.5 303.5h2.6v2.6h-2.6zM1740.0 417.4h2.6v2.6h-2.6zM2106.9 389.2h2.6v2.6h-2.6zM2281.7 634.6h2.6v2.6h-2.6zM2495.4 1111.4h2.6v2.6h-2.6zM2133.1 510.5h2.6v2.6h-2.6zM1911.6 1146.6h2.6v2.6h-2.6zM1300.5 1003.9h2.6v2.6h-2.6zM1607.5 1406.0h2.6v2.6h-2.6zM2645.4 1375.4h2.6v2.6h-2.6zM1521.4 367.5h2.6v2.6h-2.6zM1822.7 1589.9h2.6v2.6h-2.6zM883.3 415.0h2.6v2.6h-2.6zM827.8 351.4h2.6v2.6h-2.6zM1552.5 508.5h2.6v2.6h-2.6zM2393.0 1475.5h2.6v2.6h-2.6zM2360.1 972.5h2.6v2.6h-2.6zM1409.1 1160.5h2.6v2.6h-2.6zM1312.9 1016.6h2.6v2.6h-2.6zM540.5 996.2h2.6v2.6h-2.6zM1660.9 530.4h2.6v2.6h-2.6zM805.4 839.2h2.6v2.6h-2.6zM2425.4 1618.2h2.6v2.6h-2.6zM1995.1 686.6h2.6v2.6h-2.6zM1140.4 1524.2h2.6v2.6h-2.6zM1000.0 1064.3h2.6v2.6h-2.6zM2024.5 621.0h2.6v2.6h-2.6zM2485.1 576.8h2.6v2.6h-2.6zM2631.8 1215.8h2.6v2.6h-2.6zM1587.1 1035.3h2.6v2.6h-2.6zM2407.5 1428.3h2.6v2.6h-2.6zM496.8 672.2h2.6v2.6h-2.6zM420.4 817.9h2.6v2.6h-2.6zM1987.7 771.8h2.6v2.6h-2.6zM1666.4 455.2h2.6v2.6h-2.6zM862.2 691.4h2.6v2.6h-2.6zM974.1 1225.2h2.6v2.6h-2.6zM2155.4 658.9h2.6v2.6h-2.6zM2284.7 717.8h2.6v2.6h-2.6zM2272.8 1209.6h2.6v2.6h-2.6zM1525.7 1303.5h2.6v2.6h-2.6zM2174.9 535.1h2.6v2.6h-2.6zM2421.4 705.4h2.6v2.6h-2.6zM540.5 1616.5h2.6v2.6h-2.6zM2632.4 1155.9h2.6v2.6h-2.6zM498.0 243.0h2.6v2.6h-2.6zM2158.2 1195.3h2.6v2.6h-2.6zM2294.0 1571.4h2.6v2.6h-2.6zM1811.4 1365.4h2.6v2.6h-2.6zM1223.2 795.8h2.6v2.6h-2.6zM1788.0 657.8h2.6v2.6h-2.6zM1872.6 1463.6h2.6v2.6h-2.6zM1407.2 1473.9h2.6v2.6h-2.6zM2118.1 591.7h2.6v2.6h-2.6zM552.8 669.0h2.6v2.6h-2.6zM1740.5 1041.0h2.6v2.6h-2.6zM764.8 1186.7h2.6v2.6h-2.6zM1116.6 763.8h2.6v2.6h-2.6zM653.8 1221.4h2.6v2.6h-2.6zM961.0 510.4h2.6v2.6h-2.6zM2415.0 693.8h2.6v2.6h-2.6zM2217.0 307.5h2.6v2.6h-2.6zM1534.0 1131.3h2.6v2.6h-2.6zM1985.1 876.9h2.6v2.6h-2.6zM788.0 988.1h2.6v2.6h-2.6zM2387.5 639.0h2.6v2.6h-2.6zM1314.9 1156.7h2.6v2.6h-2.6zM1191.1 1136.6h2.6v2.6h-2.6zM1339.2 455.9h2.6v2.6h-2.6zM1475.7 312.6h2.6v2.6h-2.6zM580.0 829.1h2.6v2.6h-2.6zM1168.0 1351.3h2.6v2.6h-2.6zM520.2 711.8h2.6v2.6h-2.6zM1755.5 1025.3h2.6v2.6h-2.6zM1794.9 1034.6h2.6v2.6h-2.6zM2570.2 539.9h2.6v2.6h-2.6zM1538.7 331.6h2.6v2.6h-2.6zM2119.0 995.0h2.6v2.6h-2.6zM2572.9 387.8h2.6v2.6h-2.6zM1610.5 601.9h2.6v2.6h-2.6zM1344.8 1526.9h2.6v2.6h-2.6zM917.0 411.8h2.6v2.6h-2.6zM1308.3 606.1h2.6v2.6h-2.6zM2132.6 1225.5h2.6v2.6h-2.6zM992.5 1402.2h2.6v2.6h-2.6zM928.6 314.8h2.6v2.6h-2.6zM783.5 1034.9h2.6v2.6h-2.6zM2139.4 1231.6h2.6v2.6h-2.6zM761.1 776.7h2.6v2.6h-2.6zM2243.1 1115.0h2.6v2.6h-2.6zM2127.0 439.8h2.6v2.6h-2.6zM2204.8 466.0h2.6v2.6h-2.6zM469.0 898.6h2.6v2.6h-2.6zM1853.9 1114.7h2.6v2.6h-2.6zM1493.8 481.7h2.6v2.6h-2.6zM1675.8 890.5h2.6v2.6h-2.6zM402.1 594.8h2.6v2.6h-2.6zM1264.1 1252.8h2.6v2.6h-2.6zM2589.5 1596.9h2.6v2.6h-2.6zM1677.8 720.8h2.6v2.6h-2.6zM2329.3 1347.3h2.6v2.6h-2.6zM2560.5 583.7h2.6v2.6h-2.6zM2644.9 1056.7h2.6v2.6h-2.6zM1850.6 554.4h2.6v2.6h-2.6zM2475.2 428.8h2.6v2.6h-2.6zM1952.8 1524.6h2.6v2.6h-2.6zM2206.1 525.1h2.6v2.6h-2.6zM2604.9 1405.4h2.6v2.6h-2.6zM2640.1 1348.5h2.6v2.6h-2.6zM2535.6 531.9h2.6v2.6h-2.6zM877.7 561.2h2.6v2.6h-2.6zM1470.1 477.8h2.6v2.6h-2.6zM2433.0 1394.9h2.6v2.6h-2.6zM1169.2 585.3h2.6v2.6h-2.6zM705.6 515.9h2.6v2.6h-2.6zM1014.4 666.3h2.6v2.6h-2.6zM1983.2 310.3h2.6v2.6h-2.6zM1656.9 1360.6h2.6v2.6h-2.6zM942.9 1112.5h2.6v2.6h-2.6zM993.3 1480.3h2.6v2.6h-2.6zM1526.3 740.2h2.6v2.6h-2.6zM2476.0 946.0h2.6v2.6h-2.6zM1261.9 488.2h2.6v2.6h-2.6zM646.0 664.8h2.6v2.6h-2.6zM454.1 1441.3h2.6v2.6h-2.6zM2419.2 1404.7h2.6v2.6h-2.6zM1485.1 721.4h2.6v2.6h-2.6zM1047.3 418.3h2.6v2.6h-2.6zM1047.7 660.2h2.6v2.6h-2.6zM1532.5 492.5h2.6v2.6h-2.6zM1580.2 924.2h2.6v2.6h-2.6zM716.3 1036.9h2.6v2.6h-2.6zM2437.8 1284.3h2.6v2.6h-2.6zM1618.9 572.3h2.6v2.6h-2.6zM2011.7 560.8h2.6v2.6h-2.6zM2308.7 615.0h2.6v2.6h-2.6zM835.9 1317.2h2.6v2.6h-2.6zM874.0 617.7h2.6v2.6h-2.6zM1967.8 763.2h2.6v2.6h-2.6zM1287.0 1508.8h2.6v2.6h-2.6zM2352.2 1616.7h2.6v2.6h-2.6zM1657.0 755.9h2.6v2.6h-2.6zM1727.1 799.3h2.6v2.6h-2.6zM2573.3 595.6h2.6v2.6h-2.6zM2259.7 1329.4h2.6v2.6h-2.6zM1027.7 1319.7h2.6v2.6h-2.6zM1958.4 1343.3h2.6v2.6h-2.6zM1562.0 425.9h2.6v2.6h-2.6zM1485.8 1564.8h2.6v2.6h-2.6zM2440.9 673.8h2.6v2.6h-2.6zM1859.4 266.4h2.6v2.6h-2.6zM2021.0 1042.7h2.6v2.6h-2.6zM1274.5 606.4h2.6v2.6h-2.6zM587.0 560.7h2.6v2.6h-2.6zM1364.3 821.3h2.6v2.6h-2.6zM747.2 1200.1h2.6v2.6h-2.6zM422.9 476.5h2.6v2.6h-2.6zM1039.1 473.6h2.6v2.6h-2.6zM2228.5 1560.0h2.6v2.6h-2.6zM1458.1 695.8h2.6v2.6h-2.6zM2297.1 1287.7h2.6v2.6h-2.6zM1863.2 1520.4h2.6v2.6h-2.6zM566.5 1055.9h2.6v2.6h-2.6zM1002.8 1581.7h2.6v2.6h-2.6zM545.7 1466.3h2.6v2.6h-2.6zM2460.8 306.4h2.6v2.6h-2.6zM2390.8 935.2h2.6v2.6h-2.6zM2424.4 882.5h2.6v2.6h-2.6zM2603.6 668.6h2.6v2.6h-2.6zM833.6 1113.0h2.6v2.6h-2.6zM2594.8 584.1h2.6v2.6h-2.6zM1944.8 597.8h2.6v2.6h-2.6zM1236.9 1087.3h2.6v2.6h-2.6zM2132.1 920.2h2.6v2.6h-2.6zM2493.5 1143.3h2.6v2.6h-2.6zM479.5 1087.9h2.6v2.6h-2.6zM478.8 564.4h2.6v2.6h-2.6zM1603.6 799.2h2.6v2.6h-2.6zM1943.5 797.8h2.6v2.6h-2.6zM2222.0 1001.3h2.6v2.6h-2.6zM1734.0 1087.7h2.6v2.6h-2.6zM1530.2 972.8h2.6v2.6h-2.6zM413.8 434.9h2.6v2.6h-2.6zM1102.9 546.1h2.6v2.6h-2.6zM832.3 1196.7h2.6v2.6h-2.6zM1395.3 452.5h2.6v2.6h-2.6zM1873.8 473.3h2.6v2.6h-2.6zM1074.2 507.2h2.6v2.6h-2.6zM1925.1 932.7h2.6v2.6h-2.6zM429.9 1215.7h2.6v2.6h-2.6zM803.7 592.4h2.6v2.6h-2.6zM631.7 1061.9h2.6v2.6h-2.6zM1652.3 578.3h2.6v2.6h-2.6zM2639.5 785.1h2.6v2.6h-2.6zM700.4 1348.8h2.6v2.6h-2.6zM1553.2 878.3h2.6v2.6h-2.6zM1762.9 890.0h2.6v2.6h-2.6zM1373.9 287.3h2.6v2.6h-2.6zM2195.2 997.7h2.6v2.6h-2.6zM2005.5 308.3h2.6v2.6h-2.6zM1463.7 706.1h2.6v2.6h-2.6zM1583.3 1200.2h2.6v2.6h-2.6zM976.6 1255.9h2.6v2.6h-2.6zM1965.2 325.7h2.6v2.6h-2.6zM2331.8 1102.6h2.6v2.6h-2.6zM1005.3 1477.8h2.6v2.6h-2.6zM499.4 1031.3h2.6v2.6h-2.6zM2319.2 1242.1h2.6v2.6h-2.6zM2454.4 906.9h2.6v2.6h-2.6zM2456.6 290.8h2.6v2.6h-2.6zM2257.9 495.1h2.6v2.6h-2.6zM1856.1 1616.2h2.6v2.6h-2.6zM1522.2 1411.8h2.6v2.6h-2.6zM1934.1 1411.3h2.6v2.6h-2.6zM409.0 908.0h2.6v2.6h-2.6zM1863.5 1242.8h2.6v2.6h-2.6zM2511.9 479.9h2.6v2.6h-2.6zM1579.0 1097.9h2.6v2.6h-2.6zM1297.9 1513.1h2.6v2.6h-2.6zM1534.4 329.5h2.6v2.6h-2.6zM1843.1 1270.6h2.6v2.6h-2.6zM1973.1 911.8h2.6v2.6h-2.6zM1452.2 1423.6h2.6v2.6h-2.6zM1980.1 1214.5h2.6v2.6h-2.6zM2241.9 371.0h2.6v2.6h-2.6zM1974.7 1425.2h2.6v2.6h-2.6zM2049.8 1549.8h2.6v2.6h-2.6zM1289.5 1285.6h2.6v2.6h-2.6zM2121.5 1273.3h2.6v2.6h-2.6zM1556.7 901.7h2.6v2.6h-2.6zM2473.8 533.1h2.6v2.6h-2.6zM1114.2 462.7h2.6v2.6h-2.6zM2300.2 1397.6h2.6v2.6h-2.6zM1202.7 786.8h2.6v2.6h-2.6zM2173.6 1123.2h2.6v2.6h-2.6zM1370.0 1559.4h2.6v2.6h-2.6zM1593.5 357.7h2.6v2.6h-2.6zM1227.0 721.2h2.6v2.6h-2.6zM740.1 1103.6h2.6v2.6h-2.6zM1644.1 1212.2h2.6v2.6h-2.6zM2442.0 523.3h2.6v2.6h-2.6zM1024.4 1120.6h2.6v2.6h-2.6zM2060.3 1193.0h2.6v2.6h-2.6zM522.2 1331.8h2.6v2.6h-2.6zM945.8 328.1h2.6v2.6h-2.6zM2577.4 386.3h2.6v2.6h-2.6zM2530.3 524.4h2.6v2.6h-2.6zM863.9 1507.3h2.6v2.6h-2.6zM2040.1 1569.7h2.6v2.6h-2.6zM488.7 1182.8h2.6v2.6h-2.6zM1377.0 614.0h2.6v2.6h-2.6zM1360.5 1350.3h2.6v2.6h-2.6zM1449.5 1531.5h2.6v2.6h-2.6zM2508.9 1074.2h2.6v2.6h-2.6zM671.7 410.8h2.6v2.6h-2.6zM1612.2 1386.8h2.6v2.6h-2.6zM2649.7 1232.3h2.6v2.6h-2.6zM402.1 1497.1h2.6v2.6h-2.6zM1731.8 404.9h2.6v2.6h-2.6zM1977.6 1541.3h2.6v2.6h-2.6zM1015.9 1030.7h2.6v2.6h-2.6zM1814.2 1073.9h2.6v2.6h-2.6zM1158.6 996.1h2.6v2.6h-2.6zM2472.5 999.1h2.6v2.6h-2.6zM779.2 1027.0h2.6v2.6h-2.6zM2076.0 334.6h2.6v2.6h-2.6zM2340.3 892.7h2.6v2.6h-2.6zM882.7 538.4h2.6v2.6h-2.6zM580.6 1417.4h2.6v2.6h-2.6zM2243.3 806.8h2.6v2.6h-2.6zM2618.9 538.3h2.6v2.6h-2.6z" fill="#c4c400"/><path d="M407.5 1389.3h2.6v2.6h-2.6zM2111.3 480.9h2.6v2.6h-2.6zM1118.6 338.4h2.6v2.6h-2.6zM1652.6 971.7h2.6v2.6h-2.6zM1822.4 1407.2h2.6v2.6h-2.6zM2305.9 707.4h2.6v2.6h-2.6zM1344.1 439.4h2.6v2.6h-2.6zM1713.8 769.6h2.6v2.6h-2.6zM1965.4 652.0h2.6v2.6h-2.6zM1210.9 1137.9h2.6v2.6h-2.6zM737.8 557.8h2.6v2.6h-2.6zM1655.1 1158.1h2.6v2.6h-2.6zM674.1 801.5h2.6v2.6h-2.6zM1419.5 795.2h2.6v2.6h-2.6zM554.1 1187.7h2.6v2.6h-2.6zM1970.9 571.7h2.6v2.6h-2.6zM1606.1 1386.4h2.6v2.6h-2.6zM2068.1 239.5h2.6v2.6h-2.6zM1115.3 536.6h2.6v2.6h-2.6zM2354.6 1206.1h2.6v2.6h-2.6zM2087.1 244.7h2.6v2.6h-2.6zM2076.7 424.8h2.6v2.6h-2.6zM814.9 876.9h2.6v2.6h-2.6zM1767.6 582.2h2.6v2.6h-2.6zM2339.6 1250.0h2.6v2.6h-2.6zM2572.7 428.2h2.6v2.6h-2.6zM1460.2 740.1h2.6v2.6h-2.6zM1292.1 366.0h2.6v2.6h-2.6zM2435.4 400.6h2.6v2.6h-2.6zM516.0 249.9h2.6v2.6h-2.6z" fill="#a8a8a8"/><circle cx="2359" cy="413.7" r="8" fill="#ffff00"/><circle cx="2490" cy="713" r="8" fill="#ffff00"/><circle cx="1497.3" cy="820.3" r="8" fill="#ffff00"/><circle cx="1615.3" cy="899.7" r="8" fill="#ffff00"/><circle cx="1793" cy="1303.5" r="8" fill="#ffff00"/><circle cx="2282.6" cy="1385" r="8" fill="#ffff00"/><circle cx="1564.7" cy="1605.6" r="8" fill="#ffff00"/><circle cx="2503.5" cy="1603.4" r="8" fill="#ffff00"/><circle cx="879" cy="339.6" r="6" fill="#ffff00"/><circle cx="1004.6" cy="354.5" r="6" fill="#ffff00"/><circle cx="1063.8" cy="554.5" r="6" fill="#ffff00"/><circle cx="2352.3" cy="783.4" r="6" fill="#ffff00"/><circle cx="966.4" cy="314" r="4.5" fill="#ffff00"/><circle cx="1946.5" cy="626" r="4.5" fill="#ffff00"/><circle cx="2016.5" cy="759" r="4.5" fill="#ffff00"/><circle cx="1174" cy="1097" r="4.5" fill="#ffff00"/><circle cx="2228.6" cy="1235" r="4.5" fill="#ffff00"/><circle cx="890" cy="957" r="4.5" fill="#ffff00"/><path d="M1305.5 307.5h7v7h-7zM1268.5 366.5h7v7h-7zM491.8 486.5h7v7h-7zM2454.0 401.5h7v7h-7zM2029.5 489.2h7v7h-7zM473.9 710.1h7v7h-7zM465.3 773.2h7v7h-7zM1688.2 718.8h7v7h-7zM2335.9 622.5h7v7h-7zM2329.2 716.5h7v7h-7zM2598.3 690.5h7v7h-7zM2552.2 718.5h7v7h-7zM2123.3 880.5h7v7h-7zM2430.3 897.9h7v7h-7zM2057.5 963.5h7v7h-7zM1110.8 1038.0h7v7h-7zM1242.0 1121.0h7v7h-7zM1491.2 1123.5h7v7h-7zM1850.0 1007.5h7v7h-7zM1985.5 1245.5h7v7h-7zM2515.2 1291.5h7v7h-7zM668.5 1381.2h7v7h-7zM653.9 1460.1h7v7h-7zM607.5 1565.1h7v7h-7zM798.2 1425.3h7v7h-7zM881.1 1442.5h7v7h-7z" fill="#ffff00"/><circle cx="1152.5" cy="699" r="4.5" fill="#ffffff"/><rect x="2275" y="878" width="6.5" height="7" fill="#fff"/><rect x="500" y="369" width="111" height="24.399999999999977" fill="#000" stroke="#6a6a6a" stroke-width="2"/><text x="503.5" y="388.59999999999997" font-size="24" fill="#b8bec6" textLength="105" lengthAdjust="spacingAndGlyphs">6h48m30s</text><rect x="743" y="366" width="71" height="25.69999999999999" fill="#000" stroke="#6a6a6a" stroke-width="2"/><text x="746.5" y="386.9" font-size="24" fill="#b8bec6" textLength="65" lengthAdjust="spacingAndGlyphs">6h48m</text><rect x="946.5" y="366" width="112.5" height="25.69999999999999" fill="#000" stroke="#6a6a6a" stroke-width="2"/><text x="950.0" y="386.9" font-size="24" fill="#b8bec6" textLength="106.5" lengthAdjust="spacingAndGlyphs">6h47m30s</text><rect x="1189" y="366" width="74" height="25.69999999999999" fill="#000" stroke="#6a6a6a" stroke-width="2"/><text x="1192.5" y="386.9" font-size="24" fill="#b8bec6" textLength="68" lengthAdjust="spacingAndGlyphs">6h47m</text><rect x="1392.7" y="363.5" width="112.79999999999995" height="28.5" fill="#000" stroke="#6a6a6a" stroke-width="2"/><text x="1396.2" y="387.2" font-size="24" fill="#b8bec6" textLength="106.8" lengthAdjust="spacingAndGlyphs">6h46m30s</text><rect x="1638" y="364.5" width="71.59999999999991" height="27.19999999999999" fill="#000" stroke="#6a6a6a" stroke-width="2"/><text x="1641.5" y="386.9" font-size="24" fill="#b8bec6" textLength="65.6" lengthAdjust="spacingAndGlyphs">6h46m</text><rect x="1841" y="366" width="111" height="25.69999999999999" fill="#000" stroke="#6a6a6a" stroke-width="2"/><text x="1844.5" y="386.9" font-size="24" fill="#b8bec6" textLength="105" lengthAdjust="spacingAndGlyphs">6h45m30s</text><rect x="2084.5" y="366.7" width="73.5" height="24.80000000000001" fill="#000" stroke="#6a6a6a" stroke-width="2"/><text x="2088.0" y="386.7" font-size="24" fill="#b8bec6" textLength="67.5" lengthAdjust="spacingAndGlyphs">6h45m</text><rect x="2287" y="367" width="113.69999999999982" height="27" fill="#000" stroke="#6a6a6a" stroke-width="2"/><text x="2290.5" y="389.2" font-size="24" fill="#b8bec6" textLength="107.7" lengthAdjust="spacingAndGlyphs">6h44m30s</text><rect x="2530" y="369" width="74" height="25" fill="#000" stroke="#6a6a6a" stroke-width="2"/><text x="2533.5" y="389.2" font-size="24" fill="#b8bec6" textLength="68" lengthAdjust="spacingAndGlyphs">6h44m</text><rect x="439.6" y="1355" width="68" height="25" fill="#000" stroke="#6a6a6a" stroke-width="2"/><text x="443" y="1374.5" font-size="23" fill="#c8c850" textLength="62" lengthAdjust="spacingAndGlyphs">37°30'</text><text x="1488" y="333.2" font-size="23.5" fill="#c0c4c8" textLength="75.5" lengthAdjust="spacingAndGlyphs">IMX430</text><path d="M1570 928H1846M1846 930H2390M2390 932H2646M2166.5 899V930M2612.5 900V932" stroke="#7a7a7a" stroke-width="2" fill="none"/><circle cx="2166.5" cy="930" r="3" fill="#00d000"/><circle cx="2612.5" cy="932" r="3" fill="#00d000"/><text x="1271.5" y="885" font-size="24" fill="#d0d4d8" font-weight="bold" textLength="252" lengthAdjust="spacingAndGlyphs">02/10/2023 00:29:26 UT</text><text x="2165" y="887.5" font-size="24" fill="#d0d4d8" font-weight="bold" textLength="59.5" lengthAdjust="spacingAndGlyphs">00:28</text><g clip-path="url(#sc2)"><text x="2612" y="887.5" font-size="24" fill="#d0d4d8" font-weight="bold" textLength="59.5" lengthAdjust="spacingAndGlyphs">00:28</text></g><path d="M1542.0 925.0 L1568.0 921.0 L1571.0 921.6 L1575.5 927.6 L1571.0 933.6 L1568.0 934.2 L1542.0 930.2ZM1527.6 944.6 L1531.6 970.6 L1531.0 973.6 L1525.0 978.1 L1519.0 973.6 L1518.4 970.6 L1522.4 944.6ZM1508.0 930.2 L1482.0 934.2 L1479.0 933.6 L1474.5 927.6 L1479.0 921.6 L1482.0 921.0 L1508.0 925.0ZM1522.4 910.6 L1518.4 884.6 L1519.0 881.6 L1525.0 877.1 L1531.0 881.6 L1531.6 884.6 L1527.6 910.6Z" fill="#f24a4a"/><path d="M1486 927.6H1508M1542 927.6H1562M1525 889.6V910.6M1525 944.6V965.6" stroke="#20b030" stroke-width="2.2"/><circle cx="1525" cy="927.6" r="17.5" fill="none" stroke="#c4c4c4" stroke-width="3.6"/><path d="M1514 919.6l4 4M1533 935.6l4 4M1514 938.6l4-4" stroke="#40b0c0" stroke-width="2.2"/><path d="M1525 911.6V922.6" stroke="#808080" stroke-width="1.5"/><circle cx="1521" cy="923.6" r="1" fill="#c00000"/><circle cx="1529" cy="923.6" r="1" fill="#c00000"/><circle cx="1521" cy="931.6" r="1" fill="#c00000"/><circle cx="1529" cy="931.6" r="1" fill="#c00000"/><circle cx="1525" cy="927.6" r="2.8" fill="#00e020"/><circle cx="1525" cy="910.1" r="1.6" fill="#4040ff"/><circle cx="1525" cy="945.1" r="1.6" fill="#4040ff"/><circle cx="1507.5" cy="927.6" r="1.6" fill="#4040ff"/><circle cx="1542.5" cy="927.6" r="1.6" fill="#d040d0"/></g><circle cx="432" cy="256.5" r="28" fill="#000080" stroke="#b0b0c0" stroke-width="1.5" stroke-dasharray="2 1.5"/><path d="M404 256.5H433V285" stroke="#c05080" stroke-width="2.5" fill="none"/><path d="M433 257V284" stroke="#c0c060" stroke-width="2.5"/><path d="M432 221.5l-5 6h10Z M399 256.5l6-5v10Z M466 256.5l-6-5v10Z M432 291.5l-5-6h10Z" fill="#00f0f0"/><rect x="477" y="227" width="89" height="30" fill="#ffc0c0"/><text x="497" y="250" font-size="24" fill="#a00000" textLength="47" lengthAdjust="spacingAndGlyphs">Field</text><rect x="571" y="227" width="90" height="30" fill="#808080"/><text x="576" y="250" font-size="24" fill="#e8e8e8" textLength="81" lengthAdjust="spacingAndGlyphs">Horizon</text><rect x="2472" y="229" width="80" height="26.5" fill="#808080"/><text x="2475" y="250" font-size="23" fill="#e0e070" textLength="74" lengthAdjust="spacingAndGlyphs">UCAC4</text><rect x="2552" y="229" width="97" height="26.5" fill="#008000"/><text x="2556" y="250" font-size="23" fill="#b8e040" textLength="89" lengthAdjust="spacingAndGlyphs">RNGCIC</text></svg>
</body></html>
